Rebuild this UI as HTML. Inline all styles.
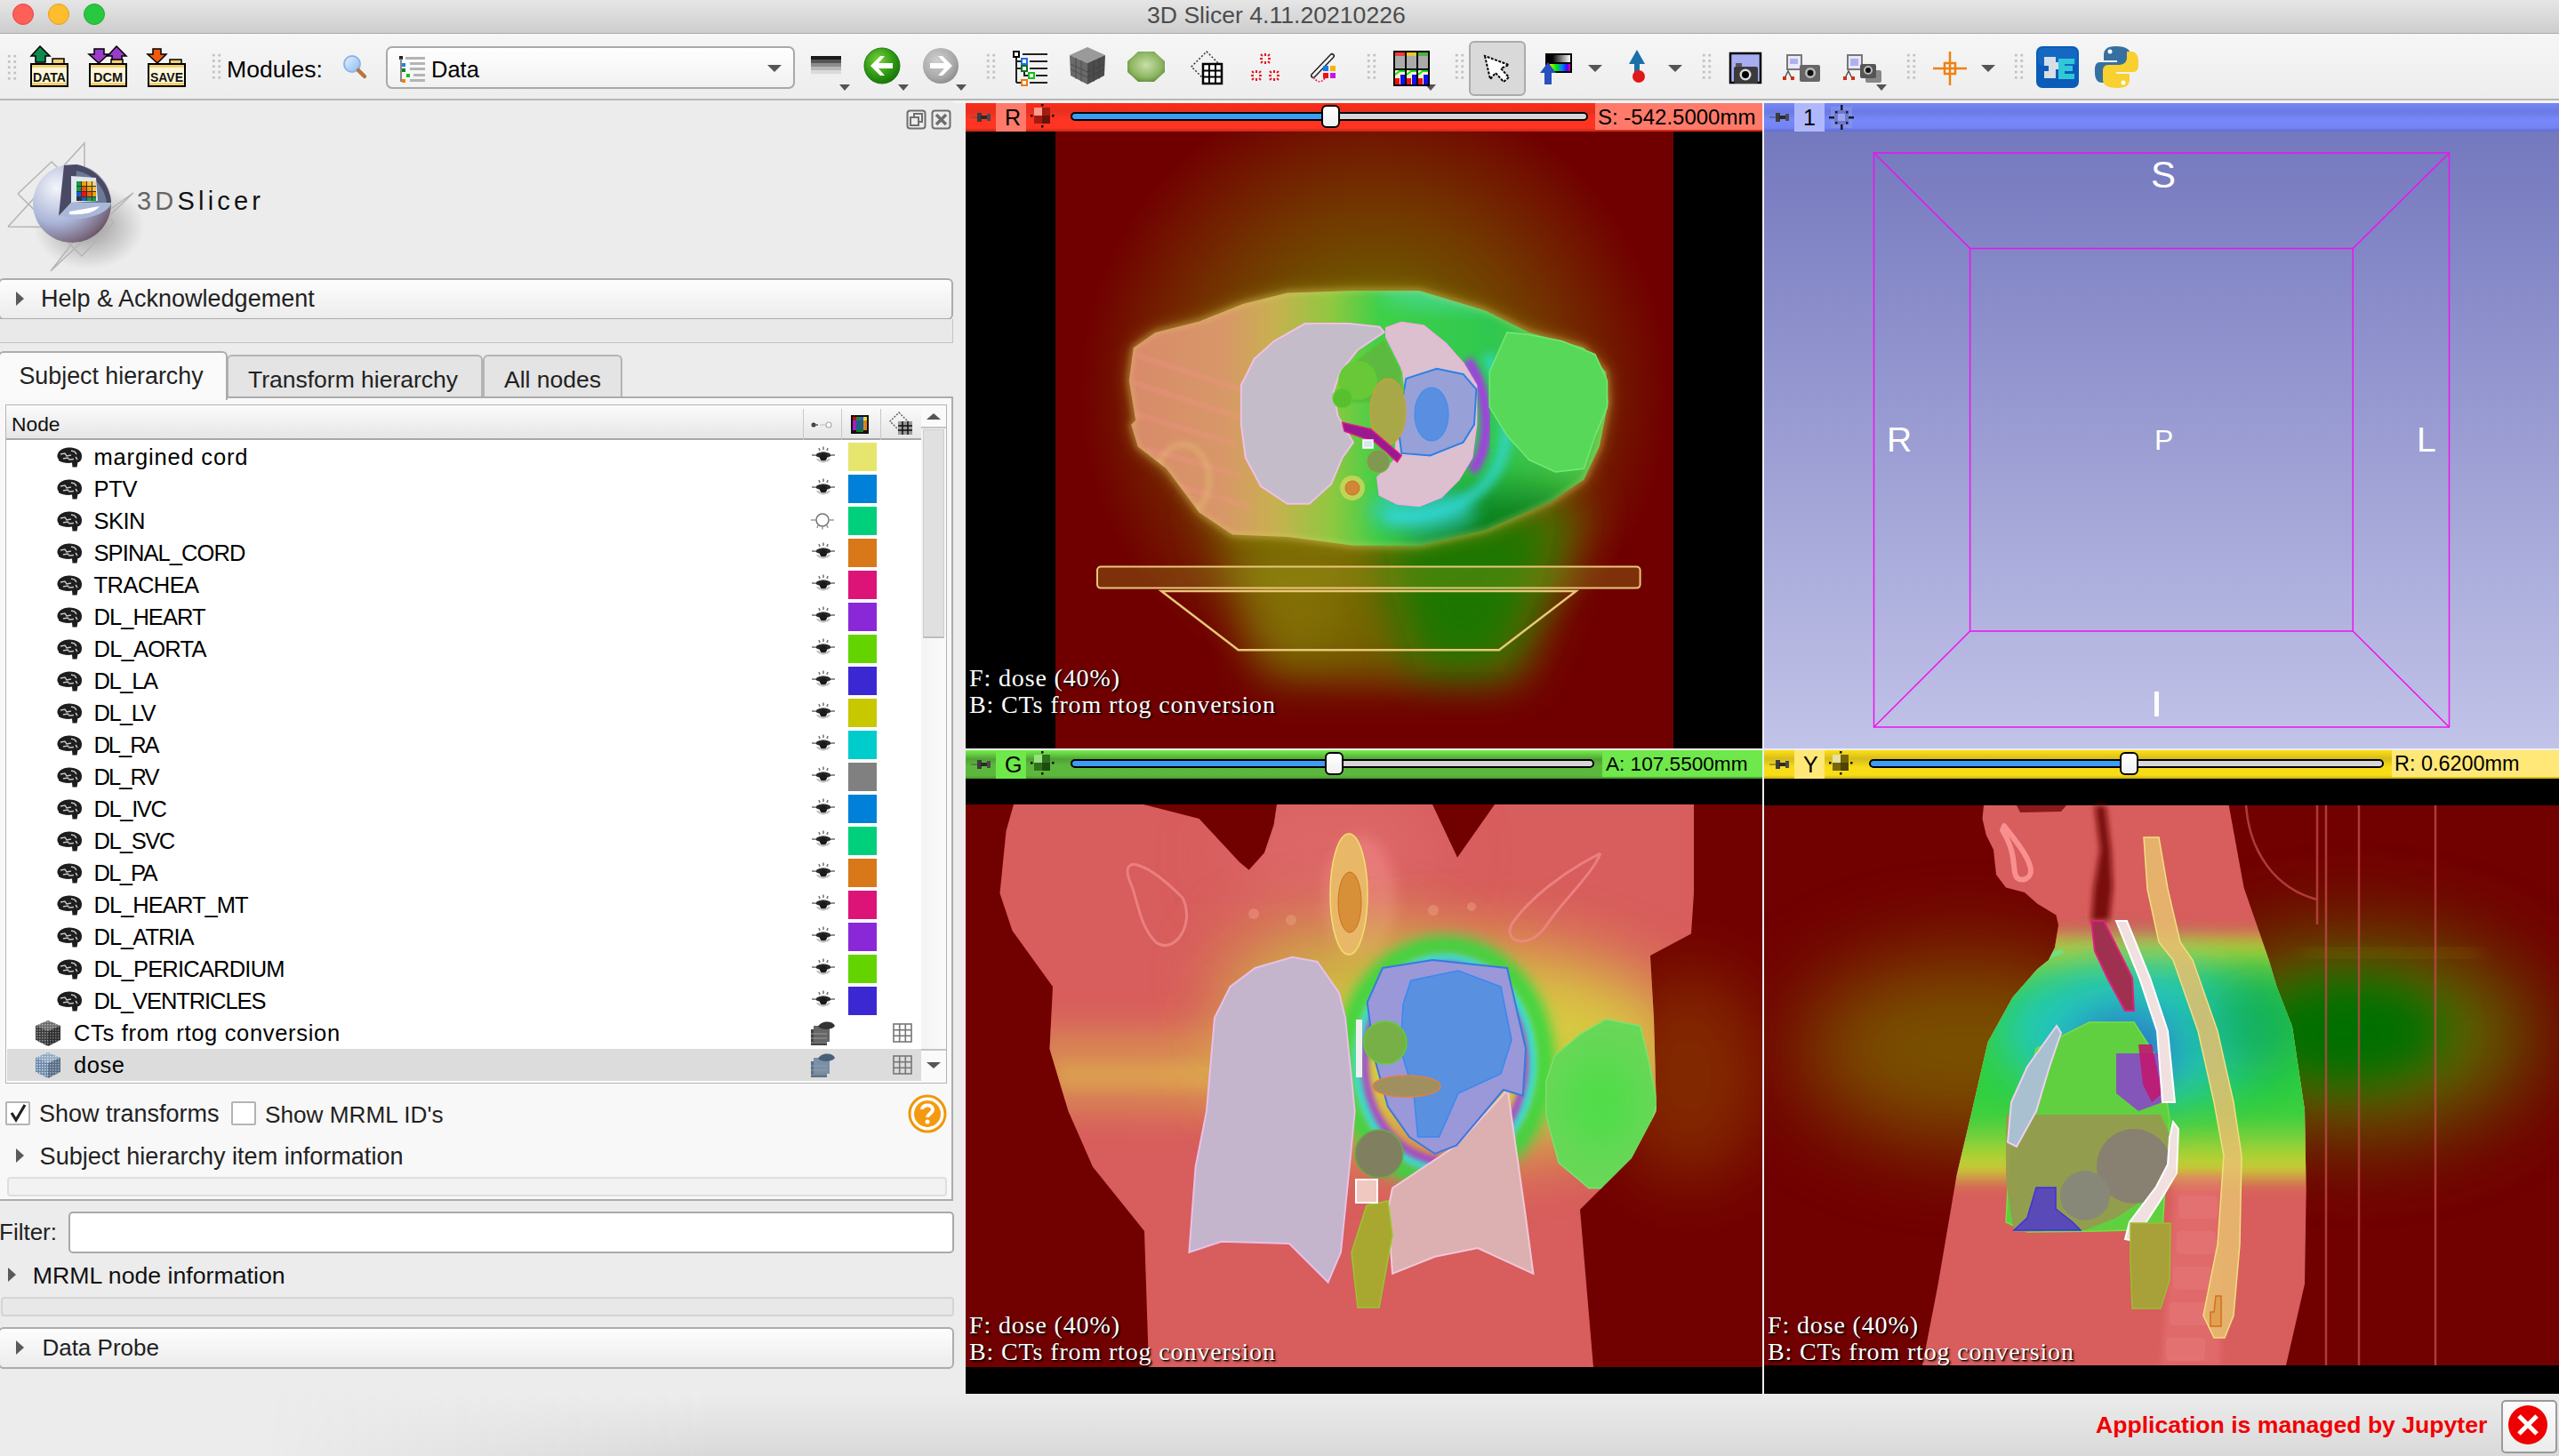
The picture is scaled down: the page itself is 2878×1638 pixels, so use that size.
<!DOCTYPE html>
<html><head><meta charset="utf-8">
<style>
*{box-sizing:border-box;margin:0;padding:0}
html,body{width:2878px;height:1638px;overflow:hidden;background:#ececec;font-family:"Liberation Sans",sans-serif;color:#000}
.a{position:absolute}
.t{position:absolute;white-space:pre;line-height:1}
svg{position:absolute;overflow:visible}
/* title */
#title{left:0;top:0;width:2878px;height:38px;background:linear-gradient(#e6e6e6,#cdcdcd);border-bottom:1.5px solid #a8a8a8}
.tl{position:absolute;top:4px;width:24px;height:24px;border-radius:50%}
#tb{left:0;top:38px;width:2878px;height:75px;background:linear-gradient(#f6f6f6,#ededed)}
#tbline{left:0;top:111px;width:2878px;height:2px;background:#b6b6b6}
.grip{position:absolute;width:13px;height:32px;background-image:radial-gradient(circle,#c2c2c2 1.3px,transparent 1.8px);background-size:6.5px 6.3px}
.dd{position:absolute;width:0;height:0;border-left:6px solid transparent;border-right:6px solid transparent;border-top:7px solid #555}
/* left panel */
.box{position:absolute;border:2px solid #acacac;border-radius:6px;background:linear-gradient(#fdfdfd,#ececec)}
.arr{position:absolute;width:0;height:0;border-top:8px solid transparent;border-bottom:8px solid transparent;border-left:9px solid #5a5a5a}
.row{position:absolute;left:8px;width:1028px;height:36px}
.rt{position:absolute;left:97.5px;top:6px;font-size:25.5px;white-space:pre;line-height:1.0}
.sw{position:absolute;left:946px;top:2px;width:32px;height:32px}
/* views */
.hdr{position:absolute;height:32px}
.vtxt{position:absolute;font-family:"Liberation Serif",serif;color:#fff;font-size:28px;letter-spacing:0.86px;line-height:30px;white-space:pre;text-shadow:1px 1px 1px #000,2px 2px 2px rgba(0,0,0,.6)}
</style></head>
<body>
<!-- TITLE BAR -->
<div id="title" class="a">
  <div class="tl" style="left:14px;background:#fe5f57;border:1px solid #e2463f"></div>
  <div class="tl" style="left:54px;background:#febc2e;border:1px solid #dea123"></div>
  <div class="tl" style="left:94px;background:#28c840;border:1px solid #1dad2b"></div>
  <div class="t" style="left:1290px;top:4px;font-size:26.6px;color:#4c4c4c">3D Slicer 4.11.20210226</div>
</div>
<!-- TOOLBAR -->
<div id="tb" class="a"></div>
<div id="tbline" class="a"></div>

<div class="grip" style="left:7px;top:60px"></div>
<div class="grip" style="left:237px;top:59px"></div>
<div class="grip" style="left:1108px;top:59px"></div>
<div class="grip" style="left:1536px;top:59px"></div>
<div class="grip" style="left:1635px;top:59px"></div>
<div class="grip" style="left:1913px;top:59px"></div>
<div class="grip" style="left:2143px;top:59px"></div>
<div class="grip" style="left:2264px;top:59px"></div>
<div class="t" style="left:255px;top:64.5px;font-size:26.6px">Modules:</div>
<!-- combo -->
<div class="a" style="left:434px;top:52px;width:460px;height:48px;border:2px solid #a9a9a9;border-radius:7px;background:linear-gradient(#ffffff,#f1f1f1)"></div>
<div class="t" style="left:485px;top:66px;font-size:25.5px">Data</div>
<div class="dd" style="left:863px;top:73px;border-left-width:8px;border-right-width:8px;border-top-width:8px"></div>
<!-- pressed button -->
<div class="a" style="left:1652px;top:46px;width:64px;height:62px;border:2px solid #ababab;border-radius:6px;background:#d9d9d9"></div>
<div class="dd" style="left:944px;top:95px"></div>
<div class="dd" style="left:1010px;top:95px"></div>
<div class="dd" style="left:1075px;top:95px"></div>
<div class="dd" style="left:1603px;top:95px"></div>
<div class="dd" style="left:1786px;top:73px;border-left-width:8px;border-right-width:8px;border-top-width:8px"></div>
<div class="dd" style="left:1876px;top:73px;border-left-width:8px;border-right-width:8px;border-top-width:8px"></div>
<div class="dd" style="left:2110px;top:95px"></div>
<div class="dd" style="left:2228px;top:73px;border-left-width:8px;border-right-width:8px;border-top-width:8px"></div>
<svg width="2878" height="113" style="left:0;top:0" viewBox="0 0 2878 113">
 <defs>
  <radialGradient id="gback" cx="0.4" cy="0.35" r="0.7"><stop offset="0" stop-color="#7fd23c"/><stop offset="0.6" stop-color="#2e9a14"/><stop offset="1" stop-color="#1a6e0a"/></radialGradient>
  <radialGradient id="gfwd" cx="0.4" cy="0.35" r="0.7"><stop offset="0" stop-color="#d0d0d0"/><stop offset="0.7" stop-color="#a8a8a8"/><stop offset="1" stop-color="#8a8a8a"/></radialGradient>
  <radialGradient id="gblob" cx="0.5" cy="0.45" r="0.6"><stop offset="0" stop-color="#c8e0a8"/><stop offset="0.7" stop-color="#8cb460"/><stop offset="1" stop-color="#5c8a38"/></radialGradient>
  <linearGradient id="gcube" x1="0" y1="0" x2="1" y2="1"><stop offset="0" stop-color="#c8c8c8"/><stop offset="1" stop-color="#3c3c3c"/></linearGradient>
  <linearGradient id="gmag" x1="0" y1="0" x2="1" y2="1"><stop offset="0" stop-color="#e8f2ff"/><stop offset="1" stop-color="#8cb8f0"/></linearGradient>
 </defs>
 <!-- DATA -->
 <g>
  <polygon points="45,52 56,63 51,63 51,70 40,70 40,63 35,63" fill="#0e8a50" stroke="#000" stroke-width="1.5"/>
  <rect x="59" y="66" width="13" height="6" fill="#f0d070" stroke="#000" stroke-width="1.5"/>
  <rect x="35" y="72" width="41" height="25" fill="#fdf6d8" stroke="#000" stroke-width="2"/>
  <rect x="36" y="93" width="39" height="3" fill="#f0d070"/>
  <rect x="36" y="73" width="39" height="3" fill="#f0d070"/>
  <text x="37" y="92" font-family="Liberation Sans" font-size="14" font-weight="700" fill="#111" textLength="37" lengthAdjust="spacingAndGlyphs">DATA</text>
 </g>
 <!-- DCM -->
 <g>
  <polygon points="106,55 117,55 117,61 122,61 111,71 100,61 106,61" fill="#9a3cc8" stroke="#000" stroke-width="1.5"/>
  <polygon points="131,52 142,63 137,63 137,70 126,70 126,63 121,63" fill="#9a3cc8" stroke="#000" stroke-width="1.5"/>
  <rect x="125" y="67" width="13" height="5" fill="#f0d070" stroke="#000" stroke-width="1.5"/>
  <rect x="101" y="72" width="41" height="25" fill="#fdf6d8" stroke="#000" stroke-width="2"/>
  <rect x="102" y="93" width="39" height="3" fill="#f0d070"/>
  <rect x="102" y="73" width="39" height="3" fill="#f0d070"/>
  <text x="105" y="92" font-family="Liberation Sans" font-size="14" font-weight="700" fill="#111" textLength="33" lengthAdjust="spacingAndGlyphs">DCM</text>
 </g>
 <!-- SAVE -->
 <g>
  <polygon points="172,55 181,55 181,61 187,61 177,71 166,61 172,61" fill="#f05a0a" stroke="#000" stroke-width="1.5"/>
  <rect x="191" y="67" width="13" height="5" fill="#f0d070" stroke="#000" stroke-width="1.5"/>
  <rect x="167" y="72" width="41" height="25" fill="#fdf6d8" stroke="#000" stroke-width="2"/>
  <rect x="168" y="93" width="39" height="3" fill="#f0d070"/>
  <rect x="168" y="73" width="39" height="3" fill="#f0d070"/>
  <text x="169" y="92" font-family="Liberation Sans" font-size="14" font-weight="700" fill="#111" textLength="37" lengthAdjust="spacingAndGlyphs">SAVE</text>
 </g>
 <!-- search -->
 <circle cx="396" cy="72" r="9" fill="url(#gmag)" stroke="#8ab4e8" stroke-width="2"/>
 <line x1="403" y1="79" x2="410" y2="86" stroke="#b8743c" stroke-width="4.5" stroke-linecap="round"/>
 <!-- data module icon in combo -->
 <g>
  <rect x="449" y="63" width="4" height="4" fill="#222"/>
  <rect x="450" y="66" width="2" height="26" fill="#888"/>
  <rect x="452" y="71" width="4" height="4" fill="#2080f0"/>
  <rect x="452" y="77" width="4" height="4" fill="#108020"/>
  <rect x="457" y="83" width="4" height="4" fill="#10c020"/>
  <rect x="452" y="89" width="4" height="4" fill="#f08010"/>
  <g fill="#b4b4b4"><rect x="456" y="64" width="22" height="3"/><rect x="461" y="70" width="17" height="3"/><rect x="461" y="76" width="17" height="3"/><rect x="465" y="83" width="13" height="3"/><rect x="461" y="89" width="17" height="3"/></g>
 </g>
 <!-- layers/colors icon -->
 <rect x="912" y="63" width="34" height="4" fill="#1a1a1a"/>
 <rect x="912" y="67" width="34" height="4" fill="#555"/>
 <rect x="912" y="71" width="34" height="4" fill="#8c8c8c"/>
 <rect x="912" y="75" width="34" height="4" fill="#b8b8b8"/>
 <rect x="912" y="79" width="34" height="4" fill="#dadada"/>
 <rect x="912" y="83" width="34" height="4" fill="#eeeeee"/>
 <!-- back -->
 <circle cx="992" cy="74" r="20" fill="url(#gback)" stroke="#1a7a10" stroke-width="1"/>
 <path d="M979,74 L990,63 L995,63 L988,71 L1004,71 L1004,77 L988,77 L995,85 L990,85 Z" fill="#fff"/>
 <!-- forward -->
 <circle cx="1058" cy="74" r="20" fill="url(#gfwd)"/>
 <path d="M1071,74 L1060,63 L1055,63 L1062,71 L1046,71 L1046,77 L1062,77 L1055,85 L1060,85 Z" fill="#fff"/>
 <!-- hierarchy -->
 <g fill="none" stroke="#222" stroke-width="2">
  <line x1="1143" y1="62" x2="1143" y2="93"/>
  <line x1="1143" y1="69" x2="1150" y2="69"/><line x1="1143" y1="77" x2="1150" y2="77"/>
  <polyline points="1152,77 1152,85 1157,85"/><line x1="1143" y1="93" x2="1150" y2="93"/>
  <line x1="1150" y1="61" x2="1178" y2="61"/><line x1="1158" y1="69" x2="1178" y2="69"/><line x1="1158" y1="77" x2="1178" y2="77"/><line x1="1165" y1="85" x2="1178" y2="85"/><line x1="1158" y1="93" x2="1178" y2="93"/>
 </g>
 <rect x="1140" y="58" width="6" height="6" fill="#fff" stroke="#000" stroke-width="2"/>
 <rect x="1149" y="66" width="6" height="6" fill="#fff" stroke="#1a6ef0" stroke-width="2"/>
 <rect x="1149" y="74" width="6" height="6" fill="#fff" stroke="#107018" stroke-width="2"/>
 <rect x="1157" y="82" width="6" height="6" fill="#fff" stroke="#10c018" stroke-width="2"/>
 <rect x="1149" y="90" width="6" height="6" fill="#fff" stroke="#f07810" stroke-width="2"/>
 <!-- cube -->
 <g>
  <polygon points="1223,53 1243,62 1223,71 1203,62" fill="#9a9a9a"/>
  <polygon points="1203,62 1223,71 1223,95 1204,85" fill="#6a6a6a"/>
  <polygon points="1243,62 1223,71 1223,95 1242,85" fill="#4c4c4c"/>
  <g stroke="#3a3a3a" stroke-width="1" opacity="0.6"><line x1="1210" y1="65" x2="1210" y2="89"/><line x1="1216" y1="68" x2="1216" y2="92"/><line x1="1230" y1="68" x2="1230" y2="92"/><line x1="1236" y1="65" x2="1236" y2="89"/><line x1="1204" y1="72" x2="1223" y2="81"/><line x1="1204" y1="78" x2="1223" y2="87"/><line x1="1242" y1="72" x2="1223" y2="81"/><line x1="1242" y1="78" x2="1223" y2="87"/></g>
 </g>
 <!-- green blob -->
 <polygon points="1280,58 1298,58 1310,69 1310,81 1298,92 1280,92 1268,81 1268,69" fill="url(#gblob)"/>
 <!-- grid icon -->
 <g>
  <polygon points="1357,58 1374,75 1357,92 1340,75" fill="none" stroke="#333" stroke-width="1.5" stroke-dasharray="2,2"/>
  <rect x="1353" y="72" width="21" height="22" fill="#fff" stroke="#000" stroke-width="2.5"/>
  <g stroke="#000" stroke-width="2"><line x1="1360" y1="72" x2="1360" y2="94"/><line x1="1367" y1="72" x2="1367" y2="94"/><line x1="1353" y1="79.5" x2="1374" y2="79.5"/><line x1="1353" y1="86.5" x2="1374" y2="86.5"/></g>
 </g>
 <!-- red sparks -->
 <g stroke="#e8101a" stroke-width="2">
  <g transform="translate(1423,66)"><line x1="0" y1="-6" x2="0" y2="-3"/><line x1="0" y1="3" x2="0" y2="6"/><line x1="-6" y1="0" x2="-3" y2="0"/><line x1="3" y1="0" x2="6" y2="0"/><line x1="-5" y1="-5" x2="-3" y2="-3"/><line x1="3" y1="3" x2="5" y2="5"/><line x1="-5" y1="5" x2="-3" y2="3"/><line x1="3" y1="-3" x2="5" y2="-5"/></g>
  <g transform="translate(1413,85)"><line x1="0" y1="-6" x2="0" y2="-3"/><line x1="0" y1="3" x2="0" y2="6"/><line x1="-6" y1="0" x2="-3" y2="0"/><line x1="3" y1="0" x2="6" y2="0"/><line x1="-5" y1="-5" x2="-3" y2="-3"/><line x1="3" y1="3" x2="5" y2="5"/><line x1="-5" y1="5" x2="-3" y2="3"/><line x1="3" y1="-3" x2="5" y2="-5"/></g>
  <g transform="translate(1433,85)"><line x1="0" y1="-6" x2="0" y2="-3"/><line x1="0" y1="3" x2="0" y2="6"/><line x1="-6" y1="0" x2="-3" y2="0"/><line x1="3" y1="0" x2="6" y2="0"/><line x1="-5" y1="-5" x2="-3" y2="-3"/><line x1="3" y1="3" x2="5" y2="5"/><line x1="-5" y1="5" x2="-3" y2="3"/><line x1="3" y1="-3" x2="5" y2="-5"/></g>
 </g>
 <!-- pencil -->
 <g>
  <line x1="1477" y1="85" x2="1498" y2="63" stroke="#222" stroke-width="6" stroke-linecap="round"/>
  <line x1="1477" y1="85" x2="1498" y2="63" stroke="#f4f4f4" stroke-width="3" stroke-linecap="round"/>
  <rect x="1488" y="74" width="6" height="6" fill="#1a78f0"/><rect x="1496" y="74" width="6" height="6" fill="#f8b400"/>
  <rect x="1488" y="82" width="6" height="6" fill="#f01010"/><rect x="1496" y="82" width="6" height="6" fill="#c818e0"/>
  <path d="M1477,87 Q1484,96 1490,88" fill="none" stroke="#e02050" stroke-width="1.5" stroke-dasharray="2,1.5"/>
 </g>
 <!-- layout icon -->
 <g>
  <rect x="1567" y="57" width="41" height="40" fill="#000"/>
  <rect x="1569" y="59" width="11" height="4" fill="#f03c3c"/><rect x="1582" y="59" width="11" height="4" fill="#e8c830"/><rect x="1595" y="59" width="11" height="4" fill="#50b040"/>
  <rect x="1569" y="63" width="11" height="14" fill="#aaa"/><rect x="1582" y="63" width="11" height="14" fill="#aaa"/><rect x="1595" y="63" width="11" height="14" fill="#aaa"/>
  <g><rect x="1569" y="79" width="11" height="16" fill="#f8f0d0"/><rect x="1569" y="88" width="5" height="7" fill="#f01010"/><rect x="1575" y="84" width="5" height="11" fill="#1010f0"/><path d="M1569,84 L1574,80 L1580,80" stroke="#10e010" stroke-width="2" fill="none"/></g>
  <g><rect x="1582" y="79" width="11" height="16" fill="#f8f0d0"/><rect x="1582" y="88" width="5" height="7" fill="#f01010"/><rect x="1588" y="84" width="5" height="11" fill="#1010f0"/><path d="M1582,84 L1587,80 L1593,80" stroke="#10e010" stroke-width="2" fill="none"/></g>
  <g><rect x="1595" y="79" width="11" height="16" fill="#f8f0d0"/><rect x="1595" y="88" width="5" height="7" fill="#f01010"/><rect x="1601" y="84" width="5" height="11" fill="#1010f0"/><path d="M1595,84 L1600,80 L1606,80" stroke="#10e010" stroke-width="2" fill="none"/></g>
 </g>
 <!-- cursor -->
 <path d="M1670,63 L1676,89 L1682,82 L1691,92 L1697,87 L1688,77 L1697,73 Z" fill="#fff" stroke="#000" stroke-width="2" stroke-dasharray="3,1.5"/>
 <!-- window level icon -->
 <g>
  <rect x="1738" y="60" width="30" height="22" fill="#000"/>
  <defs><linearGradient id="gwl" x1="0" x2="1"><stop offset="0" stop-color="#000"/><stop offset="1" stop-color="#fff"/></linearGradient>
  <linearGradient id="grb" x1="0" x2="1"><stop offset="0" stop-color="#f0f000"/><stop offset="0.3" stop-color="#00f000"/><stop offset="0.6" stop-color="#0080ff"/><stop offset="0.85" stop-color="#4000ff"/><stop offset="1" stop-color="#ff00a0"/></linearGradient></defs>
  <rect x="1746" y="62" width="20" height="8" fill="url(#gwl)"/>
  <rect x="1743" y="72" width="23" height="8" fill="url(#grb)"/>
  <polygon points="1741,70 1750,82 1745,82 1745,95 1737,95 1737,82 1732,82" fill="#2850c0"/>
 </g>
 <!-- fiducial -->
 <g>
  <polygon points="1841,56 1850,72 1844,72 1844,82 1838,82 1838,72 1832,72" fill="#1a70a8"/>
  <circle cx="1843" cy="86" r="7" fill="#e01818"/>
 </g>
 <!-- screenshot -->
 <g>
  <rect x="1946" y="60" width="34" height="33" fill="#a8acf0" stroke="#000" stroke-width="2.5"/>
  <rect x="1950" y="75" width="27" height="19" rx="2" fill="#3a3a3a"/>
  <rect x="1952" y="71" width="7" height="4" fill="#555"/>
  <circle cx="1963" cy="84" r="6.5" fill="#ddd"/><circle cx="1963" cy="84" r="4" fill="#000"/>
 </g>
 <!-- scene screenshot -->
 <g>
  <rect x="2010" y="62" width="16" height="16" fill="#e8e8f8" stroke="#777" stroke-width="2"/>
  <rect x="2013" y="66" width="9" height="6" fill="#b0b0f0"/>
  <path d="M2006,90 L2011,80 L2016,90" stroke="#555" stroke-width="1.5" fill="none"/>
  <rect x="2005" y="86" width="4" height="4" fill="#d03010"/><rect x="2014" y="86" width="4" height="4" fill="#d03010"/>
  <rect x="2024" y="73" width="23" height="19" rx="2" fill="#666"/>
  <circle cx="2036" cy="82" r="6" fill="#bbb"/><circle cx="2036" cy="82" r="3.5" fill="#111"/>
 </g>
 <g>
  <rect x="2078" y="62" width="16" height="16" fill="#e8e8f8" stroke="#777" stroke-width="2"/>
  <rect x="2081" y="66" width="9" height="8" fill="#b0b0f0"/>
  <path d="M2074,90 L2079,80 L2084,90" stroke="#555" stroke-width="1.5" fill="none"/>
  <rect x="2073" y="86" width="4" height="4" fill="#d03010"/><rect x="2082" y="86" width="4" height="4" fill="#d03010"/>
  <rect x="2098" y="79" width="18" height="14" rx="2" fill="#888"/>
  <rect x="2092" y="72" width="18" height="16" rx="2" fill="#555"/>
  <circle cx="2101" cy="79" r="5" fill="#bbb"/><circle cx="2101" cy="79" r="3" fill="#111"/>
 </g>
 <!-- crosshair -->
 <g stroke="#f08010" stroke-width="2.5" fill="none">
  <line x1="2193" y1="58" x2="2193" y2="96"/><line x1="2174" y1="77" x2="2212" y2="77"/>
  <rect x="2187" y="71" width="12" height="12"/>
 </g>
 <!-- extension -->
 <g>
  <rect x="2290" y="52" width="48" height="47" rx="7" fill="#0a5cb8"/>
  <rect x="2292" y="54" width="44" height="20" rx="6" fill="#1a70c8" opacity="0.6"/>
  <path d="M2299,64 L2312,64 L2312,70 L2318,70 L2318,78 L2312,78 L2312,88 L2299,88 L2299,80 L2304,80 L2304,74 L2299,74 Z" fill="#d8dde6"/>
  <path d="M2315,66 L2333,66 L2333,72 L2322,72 L2322,74 L2331,74 L2331,80 L2322,80 L2322,83 L2333,83 L2333,89 L2315,89 Z" fill="#30c8d8"/>
 </g>
 <!-- python -->
 <g>
  <path d="M2380,52 C2368,52 2366,57 2366,62 L2366,68 L2381,68 L2381,70 L2362,70 C2355,70 2356,78 2356,82 C2356,90 2360,93 2364,93 L2369,93 L2369,86 C2369,81 2373,78 2378,78 L2390,78 C2394,78 2396,75 2396,72 L2396,61 C2396,56 2391,52 2380,52 Z" fill="#3670a0"/>
  <path d="M2381,99 C2393,99 2395,94 2395,89 L2395,83 L2380,83 L2380,81 L2399,81 C2406,81 2405,73 2405,69 C2405,61 2401,58 2397,58 L2392,58 L2392,65 C2392,70 2388,73 2383,73 L2371,73 C2367,73 2365,76 2365,79 L2365,90 C2365,95 2370,99 2381,99 Z" fill="#f8d030"/>
  <circle cx="2373" cy="58" r="2.5" fill="#fff"/><circle cx="2388" cy="93" r="2.5" fill="#fff"/>
 </g>
</svg>


<!-- LEFT PANEL -->

<!-- float/close -->
<svg width="60" height="26" style="left:1018px;top:122px" viewBox="0 0 60 26">
 <rect x="2.5" y="2.5" width="20" height="20" rx="3" fill="none" stroke="#6e6e6e" stroke-width="2"/>
 <rect x="6" y="10" width="9" height="9" fill="none" stroke="#6e6e6e" stroke-width="2"/>
 <path d="M10,9 L10,6 L19,6 L19,15 L16,15" fill="none" stroke="#6e6e6e" stroke-width="2"/>
 <rect x="30.5" y="2.5" width="20" height="20" rx="3" fill="none" stroke="#6e6e6e" stroke-width="2"/>
 <path d="M35,7 L46,18 M46,7 L35,18" stroke="#6e6e6e" stroke-width="3.5"/>
</svg>
<!-- logo -->
<svg width="300" height="160" style="left:0;top:150px" viewBox="0 150 300 160">
 <defs>
  <radialGradient id="lgs" cx="0.3" cy="0.3" r="0.9"><stop offset="0" stop-color="#f4f6fa"/><stop offset="0.5" stop-color="#aab4d8"/><stop offset="0.8" stop-color="#7a6a80"/><stop offset="1" stop-color="#4a2a2a"/></radialGradient>
  <radialGradient id="lgsh" cx="0.5" cy="0.5" r="0.5"><stop offset="0" stop-color="#000" stop-opacity="0.35"/><stop offset="1" stop-color="#000" stop-opacity="0"/></radialGradient>
 </defs>
 <ellipse cx="100" cy="255" rx="62" ry="48" fill="url(#lgsh)"/>
 <g stroke="#b4b4b4" stroke-width="1.5" fill="none">
  <polyline points="9,255 95,161 95,256 9,255"/>
  <polyline points="57,305 150,217 95,256 57,305"/>
  <polyline points="20,218 58,182 128,250 92,288 20,218"/>
 </g>
 <circle cx="81" cy="229" r="44" fill="url(#lgs)"/>
 <path d="M72,186 L86,185 C110,190 124,210 125,228 L80,228 L66,243 Z" fill="#4a4a64"/>
 <path d="M86,192 C106,196 118,212 120,228 L84,228 Z" fill="#6a7a98"/>
 <path d="M80,198 L108,200 L110,226 L80,228 Z" fill="#dfe8ee"/>
 <rect x="86" y="204" width="22" height="22" fill="#333"/>
 <g><rect x="86" y="204" width="5" height="5" fill="#10a040"/><rect x="92" y="204" width="5" height="5" fill="#f0a000"/><rect x="98" y="204" width="5" height="5" fill="#f8c040"/><rect x="104" y="204" width="4" height="5" fill="#f8d080"/>
 <rect x="86" y="210" width="5" height="5" fill="#10a040"/><rect x="92" y="210" width="5" height="5" fill="#f05010"/><rect x="98" y="210" width="5" height="5" fill="#f0a000"/><rect x="104" y="210" width="4" height="5" fill="#f8c040"/>
 <rect x="86" y="216" width="5" height="5" fill="#1060d0"/><rect x="92" y="216" width="5" height="5" fill="#f01010"/><rect x="98" y="216" width="5" height="5" fill="#f06010"/><rect x="104" y="216" width="4" height="5" fill="#f0a000"/>
 <rect x="92" y="222" width="5" height="4" fill="#1060d0"/><rect x="98" y="222" width="5" height="4" fill="#10a040"/><rect x="104" y="222" width="4" height="4" fill="#10a040"/></g>
 <path d="M66,243 L80,228 L125,228 C124,236 110,244 90,246 Z" fill="#aab8d8"/>
 <path d="M78,238 L112,232 C106,240 92,242 78,241 Z" fill="#fff"/>
 <text x="154" y="236" font-family="Liberation Sans" font-size="29" fill="#111" letter-spacing="4.2"><tspan fill="#666">3D</tspan>Slicer</text>
</svg>
<!-- help box -->
<div class="box" style="left:-2px;top:313px;width:1074px;height:47px"></div>
<div class="arr" style="left:18px;top:328px"></div>
<div class="t" style="left:46px;top:323px;font-size:27px;color:#222">Help &amp; Acknowledgement</div>
<div class="a" style="left:-2px;top:359px;width:1074px;height:27px;border:1px solid #c4c4c4;border-top:none;background:#e9e9e9"></div>
<!-- tabs -->
<div class="a" style="left:-2px;top:446px;width:1074px;height:905px;border:2px solid #acacac;background:#f8f8f8"></div>
<div class="a" style="left:255px;top:399px;width:288px;height:47px;border:2px solid #b4b4b4;border-bottom:none;border-radius:6px 6px 0 0;background:#e4e4e4"></div>
<div class="a" style="left:543px;top:399px;width:157px;height:47px;border:2px solid #b4b4b4;border-bottom:none;border-radius:6px 6px 0 0;background:#e4e4e4"></div>
<div class="a" style="left:-2px;top:395px;width:258px;height:55px;border:2px solid #acacac;border-bottom:none;border-radius:6px 6px 0 0;background:#fafafa"></div>
<div class="t" style="left:21.5px;top:410px;font-size:26.8px;color:#222">Subject hierarchy</div>
<div class="t" style="left:279px;top:414px;font-size:26.5px;color:#222">Transform hierarchy</div>
<div class="t" style="left:567px;top:414px;font-size:26.5px;color:#222">All nodes</div>
<!-- tree -->
<div class="a" style="left:6px;top:455px;width:1059px;height:764px;border:1px solid #b4b4b4;background:#fff;overflow:hidden">
 <div class="a" style="left:0;top:0;width:1030px;height:39px;background:linear-gradient(#fbfbfb,#e6e6e6);border-bottom:2px solid #a8a8a8"></div>
 <div class="a" style="left:896px;top:4px;width:1px;height:35px;background:#c8c8c8"></div>
 <div class="a" style="left:939px;top:4px;width:1px;height:35px;background:#c8c8c8"></div>
 <div class="a" style="left:983px;top:4px;width:1px;height:35px;background:#c8c8c8"></div>
 <div class="a" style="left:1029px;top:0;width:1px;height:764px;background:#c8c8c8"></div>
 <div class="t" style="left:6px;top:10px;font-size:22.8px;color:#111">Node</div>
</div>
<svg width="140" height="40" style="left:902px;top:455px" viewBox="902 455 140 40">
 <circle cx="915" cy="478" r="2.5" fill="#333"/><line x1="913" y1="478" x2="920" y2="478" stroke="#555" stroke-width="1.5"/><circle cx="932" cy="478" r="3" fill="#fff" stroke="#aaa" stroke-width="1.2"/><line x1="922" y1="478" x2="928" y2="478" stroke="#ccc" stroke-width="1.5"/>
 <rect x="957" y="467" width="20" height="21" fill="#111"/>
 <g><rect x="959" y="469" width="4" height="4" fill="#c01010"/><rect x="963" y="469" width="4" height="4" fill="#308040"/><rect x="967" y="469" width="4" height="4" fill="#3060c0"/><rect x="971" y="469" width="4" height="4" fill="#e0e040"/>
 <rect x="959" y="473" width="4" height="11" fill="#a020c0"/><rect x="963" y="473" width="8" height="11" fill="#206080"/><rect x="971" y="473" width="4" height="11" fill="#e08020"/><rect x="963" y="484" width="8" height="2" fill="#108010"/></g>
 <polygon points="1011,464 1021,474 1011,484 1001,474" fill="none" stroke="#666" stroke-width="1.5" stroke-dasharray="2,1.5"/>
 <rect x="1010" y="474" width="16" height="15" fill="#999"/>
 <g stroke="#111" stroke-width="1.5"><line x1="1010" y1="479" x2="1026" y2="479"/><line x1="1010" y1="484" x2="1026" y2="484"/><line x1="1015" y1="474" x2="1015" y2="489"/><line x1="1021" y1="474" x2="1021" y2="489"/></g>
</svg>
<!-- scrollbar -->
<div class="a" style="left:1036px;top:456px;width:28px;height:762px;background:linear-gradient(90deg,#f4f4f4,#fafafa)"></div>
<div class="a" style="left:1036px;top:456px;width:28px;height:26px;background:#fafafa;border-bottom:2px solid #c4c4c4"></div>
<div class="dd" style="left:1042px;top:465px;border-top:none;border-bottom:7px solid #555;border-left-width:8px;border-right-width:8px"></div>
<div class="a" style="left:1038px;top:483px;width:24px;height:235px;background:#e0e0e0;border:1px solid #cccccc;border-bottom:2px solid #bdbdbd"></div>
<div class="a" style="left:1036px;top:1180px;width:28px;height:38px;background:#fafafa;border-top:2px solid #c4c4c4"></div>
<div class="dd" style="left:1042px;top:1195px;border-left-width:8px;border-right-width:8px"></div>
<div class="row" style="top:496px"><svg width="30" height="26" style="left:55px;top:5px" viewBox="0 0 30 26"><path d="M1.5,13 C1,7 7,2.5 15,2.5 C23,2.5 29,6 29,12 C29,16.5 27,19 24.5,19 L23.5,24.5 L18.5,24.5 L18,19.5 C13,20.5 7,19.5 3.5,17.5 Z" fill="#1e1e1e"/><path d="M5,10 L10,9 L12,12 L17,11 M8,15 L13,14 L15,16 L20,15.5 M17,6 L21,7 L23,10 M22,13 L24,16" stroke="#c8c8c8" stroke-width="1.4" fill="none"/></svg><div class="rt" style="letter-spacing:0.83px">margined cord</div><svg width="28" height="22" style="left:904px;top:6px" viewBox="0 0 28 22"><g stroke="#777" stroke-width="1.6"><line x1="14" y1="0.5" x2="14" y2="4"/><line x1="9" y1="2" x2="10" y2="5"/><line x1="19" y1="2" x2="18" y2="5"/><line x1="1" y1="10" x2="5" y2="10"/><line x1="23" y1="10" x2="27" y2="10"/></g><path d="M5,11 C8,5 20,5 23,11 L20,11 C17,9 11,9 8,11 Z" fill="#1c1c1c"/><ellipse cx="14" cy="10" rx="8.5" ry="3.2" fill="#2a2a2a"/><circle cx="14" cy="12.5" r="4" fill="#1a1a1a"/><path d="M7,14 C10,18.5 18,18.5 21,14" stroke="#bdbdbd" stroke-width="2" fill="none"/></svg><div class="sw" style="background:#e6e66e"></div></div>
<div class="row" style="top:532px"><svg width="30" height="26" style="left:55px;top:5px" viewBox="0 0 30 26"><path d="M1.5,13 C1,7 7,2.5 15,2.5 C23,2.5 29,6 29,12 C29,16.5 27,19 24.5,19 L23.5,24.5 L18.5,24.5 L18,19.5 C13,20.5 7,19.5 3.5,17.5 Z" fill="#1e1e1e"/><path d="M5,10 L10,9 L12,12 L17,11 M8,15 L13,14 L15,16 L20,15.5 M17,6 L21,7 L23,10 M22,13 L24,16" stroke="#c8c8c8" stroke-width="1.4" fill="none"/></svg><div class="rt" style="letter-spacing:-0.3px">PTV</div><svg width="28" height="22" style="left:904px;top:6px" viewBox="0 0 28 22"><g stroke="#777" stroke-width="1.6"><line x1="14" y1="0.5" x2="14" y2="4"/><line x1="9" y1="2" x2="10" y2="5"/><line x1="19" y1="2" x2="18" y2="5"/><line x1="1" y1="10" x2="5" y2="10"/><line x1="23" y1="10" x2="27" y2="10"/></g><path d="M5,11 C8,5 20,5 23,11 L20,11 C17,9 11,9 8,11 Z" fill="#1c1c1c"/><ellipse cx="14" cy="10" rx="8.5" ry="3.2" fill="#2a2a2a"/><circle cx="14" cy="12.5" r="4" fill="#1a1a1a"/><path d="M7,14 C10,18.5 18,18.5 21,14" stroke="#bdbdbd" stroke-width="2" fill="none"/></svg><div class="sw" style="background:#0080d8"></div></div>
<div class="row" style="top:568px"><svg width="30" height="26" style="left:55px;top:5px" viewBox="0 0 30 26"><path d="M1.5,13 C1,7 7,2.5 15,2.5 C23,2.5 29,6 29,12 C29,16.5 27,19 24.5,19 L23.5,24.5 L18.5,24.5 L18,19.5 C13,20.5 7,19.5 3.5,17.5 Z" fill="#1e1e1e"/><path d="M5,10 L10,9 L12,12 L17,11 M8,15 L13,14 L15,16 L20,15.5 M17,6 L21,7 L23,10 M22,13 L24,16" stroke="#c8c8c8" stroke-width="1.4" fill="none"/></svg><div class="rt" style="letter-spacing:-0.51px">SKIN</div><svg width="28" height="22" style="left:903px;top:6px" viewBox="0 0 28 22"><circle cx="14" cy="11" r="7" fill="#fff" stroke="#707070" stroke-width="1.5"/><g stroke="#999" stroke-width="1.5"><line x1="1" y1="11" x2="6" y2="11"/><line x1="22" y1="11" x2="27" y2="11"/><line x1="14" y1="18" x2="14" y2="21.5"/><line x1="9" y1="17" x2="8" y2="20"/><line x1="19" y1="17" x2="20" y2="20"/></g></svg><div class="sw" style="background:#00d07c"></div></div>
<div class="row" style="top:604px"><svg width="30" height="26" style="left:55px;top:5px" viewBox="0 0 30 26"><path d="M1.5,13 C1,7 7,2.5 15,2.5 C23,2.5 29,6 29,12 C29,16.5 27,19 24.5,19 L23.5,24.5 L18.5,24.5 L18,19.5 C13,20.5 7,19.5 3.5,17.5 Z" fill="#1e1e1e"/><path d="M5,10 L10,9 L12,12 L17,11 M8,15 L13,14 L15,16 L20,15.5 M17,6 L21,7 L23,10 M22,13 L24,16" stroke="#c8c8c8" stroke-width="1.4" fill="none"/></svg><div class="rt" style="letter-spacing:-0.9px">SPINAL_CORD</div><svg width="28" height="22" style="left:904px;top:6px" viewBox="0 0 28 22"><g stroke="#777" stroke-width="1.6"><line x1="14" y1="0.5" x2="14" y2="4"/><line x1="9" y1="2" x2="10" y2="5"/><line x1="19" y1="2" x2="18" y2="5"/><line x1="1" y1="10" x2="5" y2="10"/><line x1="23" y1="10" x2="27" y2="10"/></g><path d="M5,11 C8,5 20,5 23,11 L20,11 C17,9 11,9 8,11 Z" fill="#1c1c1c"/><ellipse cx="14" cy="10" rx="8.5" ry="3.2" fill="#2a2a2a"/><circle cx="14" cy="12.5" r="4" fill="#1a1a1a"/><path d="M7,14 C10,18.5 18,18.5 21,14" stroke="#bdbdbd" stroke-width="2" fill="none"/></svg><div class="sw" style="background:#d87818"></div></div>
<div class="row" style="top:640px"><svg width="30" height="26" style="left:55px;top:5px" viewBox="0 0 30 26"><path d="M1.5,13 C1,7 7,2.5 15,2.5 C23,2.5 29,6 29,12 C29,16.5 27,19 24.5,19 L23.5,24.5 L18.5,24.5 L18,19.5 C13,20.5 7,19.5 3.5,17.5 Z" fill="#1e1e1e"/><path d="M5,10 L10,9 L12,12 L17,11 M8,15 L13,14 L15,16 L20,15.5 M17,6 L21,7 L23,10 M22,13 L24,16" stroke="#c8c8c8" stroke-width="1.4" fill="none"/></svg><div class="rt" style="letter-spacing:-0.54px">TRACHEA</div><svg width="28" height="22" style="left:904px;top:6px" viewBox="0 0 28 22"><g stroke="#777" stroke-width="1.6"><line x1="14" y1="0.5" x2="14" y2="4"/><line x1="9" y1="2" x2="10" y2="5"/><line x1="19" y1="2" x2="18" y2="5"/><line x1="1" y1="10" x2="5" y2="10"/><line x1="23" y1="10" x2="27" y2="10"/></g><path d="M5,11 C8,5 20,5 23,11 L20,11 C17,9 11,9 8,11 Z" fill="#1c1c1c"/><ellipse cx="14" cy="10" rx="8.5" ry="3.2" fill="#2a2a2a"/><circle cx="14" cy="12.5" r="4" fill="#1a1a1a"/><path d="M7,14 C10,18.5 18,18.5 21,14" stroke="#bdbdbd" stroke-width="2" fill="none"/></svg><div class="sw" style="background:#dc1478"></div></div>
<div class="row" style="top:676px"><svg width="30" height="26" style="left:55px;top:5px" viewBox="0 0 30 26"><path d="M1.5,13 C1,7 7,2.5 15,2.5 C23,2.5 29,6 29,12 C29,16.5 27,19 24.5,19 L23.5,24.5 L18.5,24.5 L18,19.5 C13,20.5 7,19.5 3.5,17.5 Z" fill="#1e1e1e"/><path d="M5,10 L10,9 L12,12 L17,11 M8,15 L13,14 L15,16 L20,15.5 M17,6 L21,7 L23,10 M22,13 L24,16" stroke="#c8c8c8" stroke-width="1.4" fill="none"/></svg><div class="rt" style="letter-spacing:-0.96px">DL_HEART</div><svg width="28" height="22" style="left:904px;top:6px" viewBox="0 0 28 22"><g stroke="#777" stroke-width="1.6"><line x1="14" y1="0.5" x2="14" y2="4"/><line x1="9" y1="2" x2="10" y2="5"/><line x1="19" y1="2" x2="18" y2="5"/><line x1="1" y1="10" x2="5" y2="10"/><line x1="23" y1="10" x2="27" y2="10"/></g><path d="M5,11 C8,5 20,5 23,11 L20,11 C17,9 11,9 8,11 Z" fill="#1c1c1c"/><ellipse cx="14" cy="10" rx="8.5" ry="3.2" fill="#2a2a2a"/><circle cx="14" cy="12.5" r="4" fill="#1a1a1a"/><path d="M7,14 C10,18.5 18,18.5 21,14" stroke="#bdbdbd" stroke-width="2" fill="none"/></svg><div class="sw" style="background:#8a28d8"></div></div>
<div class="row" style="top:712px"><svg width="30" height="26" style="left:55px;top:5px" viewBox="0 0 30 26"><path d="M1.5,13 C1,7 7,2.5 15,2.5 C23,2.5 29,6 29,12 C29,16.5 27,19 24.5,19 L23.5,24.5 L18.5,24.5 L18,19.5 C13,20.5 7,19.5 3.5,17.5 Z" fill="#1e1e1e"/><path d="M5,10 L10,9 L12,12 L17,11 M8,15 L13,14 L15,16 L20,15.5 M17,6 L21,7 L23,10 M22,13 L24,16" stroke="#c8c8c8" stroke-width="1.4" fill="none"/></svg><div class="rt" style="letter-spacing:-0.75px">DL_AORTA</div><svg width="28" height="22" style="left:904px;top:6px" viewBox="0 0 28 22"><g stroke="#777" stroke-width="1.6"><line x1="14" y1="0.5" x2="14" y2="4"/><line x1="9" y1="2" x2="10" y2="5"/><line x1="19" y1="2" x2="18" y2="5"/><line x1="1" y1="10" x2="5" y2="10"/><line x1="23" y1="10" x2="27" y2="10"/></g><path d="M5,11 C8,5 20,5 23,11 L20,11 C17,9 11,9 8,11 Z" fill="#1c1c1c"/><ellipse cx="14" cy="10" rx="8.5" ry="3.2" fill="#2a2a2a"/><circle cx="14" cy="12.5" r="4" fill="#1a1a1a"/><path d="M7,14 C10,18.5 18,18.5 21,14" stroke="#bdbdbd" stroke-width="2" fill="none"/></svg><div class="sw" style="background:#64d400"></div></div>
<div class="row" style="top:748px"><svg width="30" height="26" style="left:55px;top:5px" viewBox="0 0 30 26"><path d="M1.5,13 C1,7 7,2.5 15,2.5 C23,2.5 29,6 29,12 C29,16.5 27,19 24.5,19 L23.5,24.5 L18.5,24.5 L18,19.5 C13,20.5 7,19.5 3.5,17.5 Z" fill="#1e1e1e"/><path d="M5,10 L10,9 L12,12 L17,11 M8,15 L13,14 L15,16 L20,15.5 M17,6 L21,7 L23,10 M22,13 L24,16" stroke="#c8c8c8" stroke-width="1.4" fill="none"/></svg><div class="rt" style="letter-spacing:-1.37px">DL_LA</div><svg width="28" height="22" style="left:904px;top:6px" viewBox="0 0 28 22"><g stroke="#777" stroke-width="1.6"><line x1="14" y1="0.5" x2="14" y2="4"/><line x1="9" y1="2" x2="10" y2="5"/><line x1="19" y1="2" x2="18" y2="5"/><line x1="1" y1="10" x2="5" y2="10"/><line x1="23" y1="10" x2="27" y2="10"/></g><path d="M5,11 C8,5 20,5 23,11 L20,11 C17,9 11,9 8,11 Z" fill="#1c1c1c"/><ellipse cx="14" cy="10" rx="8.5" ry="3.2" fill="#2a2a2a"/><circle cx="14" cy="12.5" r="4" fill="#1a1a1a"/><path d="M7,14 C10,18.5 18,18.5 21,14" stroke="#bdbdbd" stroke-width="2" fill="none"/></svg><div class="sw" style="background:#3c28d2"></div></div>
<div class="row" style="top:784px"><svg width="30" height="26" style="left:55px;top:5px" viewBox="0 0 30 26"><path d="M1.5,13 C1,7 7,2.5 15,2.5 C23,2.5 29,6 29,12 C29,16.5 27,19 24.5,19 L23.5,24.5 L18.5,24.5 L18,19.5 C13,20.5 7,19.5 3.5,17.5 Z" fill="#1e1e1e"/><path d="M5,10 L10,9 L12,12 L17,11 M8,15 L13,14 L15,16 L20,15.5 M17,6 L21,7 L23,10 M22,13 L24,16" stroke="#c8c8c8" stroke-width="1.4" fill="none"/></svg><div class="rt" style="letter-spacing:-1.52px">DL_LV</div><svg width="28" height="22" style="left:904px;top:6px" viewBox="0 0 28 22"><g stroke="#777" stroke-width="1.6"><line x1="14" y1="0.5" x2="14" y2="4"/><line x1="9" y1="2" x2="10" y2="5"/><line x1="19" y1="2" x2="18" y2="5"/><line x1="1" y1="10" x2="5" y2="10"/><line x1="23" y1="10" x2="27" y2="10"/></g><path d="M5,11 C8,5 20,5 23,11 L20,11 C17,9 11,9 8,11 Z" fill="#1c1c1c"/><ellipse cx="14" cy="10" rx="8.5" ry="3.2" fill="#2a2a2a"/><circle cx="14" cy="12.5" r="4" fill="#1a1a1a"/><path d="M7,14 C10,18.5 18,18.5 21,14" stroke="#bdbdbd" stroke-width="2" fill="none"/></svg><div class="sw" style="background:#c8c800"></div></div>
<div class="row" style="top:820px"><svg width="30" height="26" style="left:55px;top:5px" viewBox="0 0 30 26"><path d="M1.5,13 C1,7 7,2.5 15,2.5 C23,2.5 29,6 29,12 C29,16.5 27,19 24.5,19 L23.5,24.5 L18.5,24.5 L18,19.5 C13,20.5 7,19.5 3.5,17.5 Z" fill="#1e1e1e"/><path d="M5,10 L10,9 L12,12 L17,11 M8,15 L13,14 L15,16 L20,15.5 M17,6 L21,7 L23,10 M22,13 L24,16" stroke="#c8c8c8" stroke-width="1.4" fill="none"/></svg><div class="rt" style="letter-spacing:-2.05px">DL_RA</div><svg width="28" height="22" style="left:904px;top:6px" viewBox="0 0 28 22"><g stroke="#777" stroke-width="1.6"><line x1="14" y1="0.5" x2="14" y2="4"/><line x1="9" y1="2" x2="10" y2="5"/><line x1="19" y1="2" x2="18" y2="5"/><line x1="1" y1="10" x2="5" y2="10"/><line x1="23" y1="10" x2="27" y2="10"/></g><path d="M5,11 C8,5 20,5 23,11 L20,11 C17,9 11,9 8,11 Z" fill="#1c1c1c"/><ellipse cx="14" cy="10" rx="8.5" ry="3.2" fill="#2a2a2a"/><circle cx="14" cy="12.5" r="4" fill="#1a1a1a"/><path d="M7,14 C10,18.5 18,18.5 21,14" stroke="#bdbdbd" stroke-width="2" fill="none"/></svg><div class="sw" style="background:#00cccc"></div></div>
<div class="row" style="top:856px"><svg width="30" height="26" style="left:55px;top:5px" viewBox="0 0 30 26"><path d="M1.5,13 C1,7 7,2.5 15,2.5 C23,2.5 29,6 29,12 C29,16.5 27,19 24.5,19 L23.5,24.5 L18.5,24.5 L18,19.5 C13,20.5 7,19.5 3.5,17.5 Z" fill="#1e1e1e"/><path d="M5,10 L10,9 L12,12 L17,11 M8,15 L13,14 L15,16 L20,15.5 M17,6 L21,7 L23,10 M22,13 L24,16" stroke="#c8c8c8" stroke-width="1.4" fill="none"/></svg><div class="rt" style="letter-spacing:-1.94px">DL_RV</div><svg width="28" height="22" style="left:904px;top:6px" viewBox="0 0 28 22"><g stroke="#777" stroke-width="1.6"><line x1="14" y1="0.5" x2="14" y2="4"/><line x1="9" y1="2" x2="10" y2="5"/><line x1="19" y1="2" x2="18" y2="5"/><line x1="1" y1="10" x2="5" y2="10"/><line x1="23" y1="10" x2="27" y2="10"/></g><path d="M5,11 C8,5 20,5 23,11 L20,11 C17,9 11,9 8,11 Z" fill="#1c1c1c"/><ellipse cx="14" cy="10" rx="8.5" ry="3.2" fill="#2a2a2a"/><circle cx="14" cy="12.5" r="4" fill="#1a1a1a"/><path d="M7,14 C10,18.5 18,18.5 21,14" stroke="#bdbdbd" stroke-width="2" fill="none"/></svg><div class="sw" style="background:#808080"></div></div>
<div class="row" style="top:892px"><svg width="30" height="26" style="left:55px;top:5px" viewBox="0 0 30 26"><path d="M1.5,13 C1,7 7,2.5 15,2.5 C23,2.5 29,6 29,12 C29,16.5 27,19 24.5,19 L23.5,24.5 L18.5,24.5 L18,19.5 C13,20.5 7,19.5 3.5,17.5 Z" fill="#1e1e1e"/><path d="M5,10 L10,9 L12,12 L17,11 M8,15 L13,14 L15,16 L20,15.5 M17,6 L21,7 L23,10 M22,13 L24,16" stroke="#c8c8c8" stroke-width="1.4" fill="none"/></svg><div class="rt" style="letter-spacing:-1.38px">DL_IVC</div><svg width="28" height="22" style="left:904px;top:6px" viewBox="0 0 28 22"><g stroke="#777" stroke-width="1.6"><line x1="14" y1="0.5" x2="14" y2="4"/><line x1="9" y1="2" x2="10" y2="5"/><line x1="19" y1="2" x2="18" y2="5"/><line x1="1" y1="10" x2="5" y2="10"/><line x1="23" y1="10" x2="27" y2="10"/></g><path d="M5,11 C8,5 20,5 23,11 L20,11 C17,9 11,9 8,11 Z" fill="#1c1c1c"/><ellipse cx="14" cy="10" rx="8.5" ry="3.2" fill="#2a2a2a"/><circle cx="14" cy="12.5" r="4" fill="#1a1a1a"/><path d="M7,14 C10,18.5 18,18.5 21,14" stroke="#bdbdbd" stroke-width="2" fill="none"/></svg><div class="sw" style="background:#0080d8"></div></div>
<div class="row" style="top:928px"><svg width="30" height="26" style="left:55px;top:5px" viewBox="0 0 30 26"><path d="M1.5,13 C1,7 7,2.5 15,2.5 C23,2.5 29,6 29,12 C29,16.5 27,19 24.5,19 L23.5,24.5 L18.5,24.5 L18,19.5 C13,20.5 7,19.5 3.5,17.5 Z" fill="#1e1e1e"/><path d="M5,10 L10,9 L12,12 L17,11 M8,15 L13,14 L15,16 L20,15.5 M17,6 L21,7 L23,10 M22,13 L24,16" stroke="#c8c8c8" stroke-width="1.4" fill="none"/></svg><div class="rt" style="letter-spacing:-1.52px">DL_SVC</div><svg width="28" height="22" style="left:904px;top:6px" viewBox="0 0 28 22"><g stroke="#777" stroke-width="1.6"><line x1="14" y1="0.5" x2="14" y2="4"/><line x1="9" y1="2" x2="10" y2="5"/><line x1="19" y1="2" x2="18" y2="5"/><line x1="1" y1="10" x2="5" y2="10"/><line x1="23" y1="10" x2="27" y2="10"/></g><path d="M5,11 C8,5 20,5 23,11 L20,11 C17,9 11,9 8,11 Z" fill="#1c1c1c"/><ellipse cx="14" cy="10" rx="8.5" ry="3.2" fill="#2a2a2a"/><circle cx="14" cy="12.5" r="4" fill="#1a1a1a"/><path d="M7,14 C10,18.5 18,18.5 21,14" stroke="#bdbdbd" stroke-width="2" fill="none"/></svg><div class="sw" style="background:#00d07c"></div></div>
<div class="row" style="top:964px"><svg width="30" height="26" style="left:55px;top:5px" viewBox="0 0 30 26"><path d="M1.5,13 C1,7 7,2.5 15,2.5 C23,2.5 29,6 29,12 C29,16.5 27,19 24.5,19 L23.5,24.5 L18.5,24.5 L18,19.5 C13,20.5 7,19.5 3.5,17.5 Z" fill="#1e1e1e"/><path d="M5,10 L10,9 L12,12 L17,11 M8,15 L13,14 L15,16 L20,15.5 M17,6 L21,7 L23,10 M22,13 L24,16" stroke="#c8c8c8" stroke-width="1.4" fill="none"/></svg><div class="rt" style="letter-spacing:-1.73px">DL_PA</div><svg width="28" height="22" style="left:904px;top:6px" viewBox="0 0 28 22"><g stroke="#777" stroke-width="1.6"><line x1="14" y1="0.5" x2="14" y2="4"/><line x1="9" y1="2" x2="10" y2="5"/><line x1="19" y1="2" x2="18" y2="5"/><line x1="1" y1="10" x2="5" y2="10"/><line x1="23" y1="10" x2="27" y2="10"/></g><path d="M5,11 C8,5 20,5 23,11 L20,11 C17,9 11,9 8,11 Z" fill="#1c1c1c"/><ellipse cx="14" cy="10" rx="8.5" ry="3.2" fill="#2a2a2a"/><circle cx="14" cy="12.5" r="4" fill="#1a1a1a"/><path d="M7,14 C10,18.5 18,18.5 21,14" stroke="#bdbdbd" stroke-width="2" fill="none"/></svg><div class="sw" style="background:#d87818"></div></div>
<div class="row" style="top:1000px"><svg width="30" height="26" style="left:55px;top:5px" viewBox="0 0 30 26"><path d="M1.5,13 C1,7 7,2.5 15,2.5 C23,2.5 29,6 29,12 C29,16.5 27,19 24.5,19 L23.5,24.5 L18.5,24.5 L18,19.5 C13,20.5 7,19.5 3.5,17.5 Z" fill="#1e1e1e"/><path d="M5,10 L10,9 L12,12 L17,11 M8,15 L13,14 L15,16 L20,15.5 M17,6 L21,7 L23,10 M22,13 L24,16" stroke="#c8c8c8" stroke-width="1.4" fill="none"/></svg><div class="rt" style="letter-spacing:-0.97px">DL_HEART_MT</div><svg width="28" height="22" style="left:904px;top:6px" viewBox="0 0 28 22"><g stroke="#777" stroke-width="1.6"><line x1="14" y1="0.5" x2="14" y2="4"/><line x1="9" y1="2" x2="10" y2="5"/><line x1="19" y1="2" x2="18" y2="5"/><line x1="1" y1="10" x2="5" y2="10"/><line x1="23" y1="10" x2="27" y2="10"/></g><path d="M5,11 C8,5 20,5 23,11 L20,11 C17,9 11,9 8,11 Z" fill="#1c1c1c"/><ellipse cx="14" cy="10" rx="8.5" ry="3.2" fill="#2a2a2a"/><circle cx="14" cy="12.5" r="4" fill="#1a1a1a"/><path d="M7,14 C10,18.5 18,18.5 21,14" stroke="#bdbdbd" stroke-width="2" fill="none"/></svg><div class="sw" style="background:#dc1478"></div></div>
<div class="row" style="top:1036px"><svg width="30" height="26" style="left:55px;top:5px" viewBox="0 0 30 26"><path d="M1.5,13 C1,7 7,2.5 15,2.5 C23,2.5 29,6 29,12 C29,16.5 27,19 24.5,19 L23.5,24.5 L18.5,24.5 L18,19.5 C13,20.5 7,19.5 3.5,17.5 Z" fill="#1e1e1e"/><path d="M5,10 L10,9 L12,12 L17,11 M8,15 L13,14 L15,16 L20,15.5 M17,6 L21,7 L23,10 M22,13 L24,16" stroke="#c8c8c8" stroke-width="1.4" fill="none"/></svg><div class="rt" style="letter-spacing:-1.0px">DL_ATRIA</div><svg width="28" height="22" style="left:904px;top:6px" viewBox="0 0 28 22"><g stroke="#777" stroke-width="1.6"><line x1="14" y1="0.5" x2="14" y2="4"/><line x1="9" y1="2" x2="10" y2="5"/><line x1="19" y1="2" x2="18" y2="5"/><line x1="1" y1="10" x2="5" y2="10"/><line x1="23" y1="10" x2="27" y2="10"/></g><path d="M5,11 C8,5 20,5 23,11 L20,11 C17,9 11,9 8,11 Z" fill="#1c1c1c"/><ellipse cx="14" cy="10" rx="8.5" ry="3.2" fill="#2a2a2a"/><circle cx="14" cy="12.5" r="4" fill="#1a1a1a"/><path d="M7,14 C10,18.5 18,18.5 21,14" stroke="#bdbdbd" stroke-width="2" fill="none"/></svg><div class="sw" style="background:#8a28d8"></div></div>
<div class="row" style="top:1072px"><svg width="30" height="26" style="left:55px;top:5px" viewBox="0 0 30 26"><path d="M1.5,13 C1,7 7,2.5 15,2.5 C23,2.5 29,6 29,12 C29,16.5 27,19 24.5,19 L23.5,24.5 L18.5,24.5 L18,19.5 C13,20.5 7,19.5 3.5,17.5 Z" fill="#1e1e1e"/><path d="M5,10 L10,9 L12,12 L17,11 M8,15 L13,14 L15,16 L20,15.5 M17,6 L21,7 L23,10 M22,13 L24,16" stroke="#c8c8c8" stroke-width="1.4" fill="none"/></svg><div class="rt" style="letter-spacing:-0.79px">DL_PERICARDIUM</div><svg width="28" height="22" style="left:904px;top:6px" viewBox="0 0 28 22"><g stroke="#777" stroke-width="1.6"><line x1="14" y1="0.5" x2="14" y2="4"/><line x1="9" y1="2" x2="10" y2="5"/><line x1="19" y1="2" x2="18" y2="5"/><line x1="1" y1="10" x2="5" y2="10"/><line x1="23" y1="10" x2="27" y2="10"/></g><path d="M5,11 C8,5 20,5 23,11 L20,11 C17,9 11,9 8,11 Z" fill="#1c1c1c"/><ellipse cx="14" cy="10" rx="8.5" ry="3.2" fill="#2a2a2a"/><circle cx="14" cy="12.5" r="4" fill="#1a1a1a"/><path d="M7,14 C10,18.5 18,18.5 21,14" stroke="#bdbdbd" stroke-width="2" fill="none"/></svg><div class="sw" style="background:#64d400"></div></div>
<div class="row" style="top:1108px"><svg width="30" height="26" style="left:55px;top:5px" viewBox="0 0 30 26"><path d="M1.5,13 C1,7 7,2.5 15,2.5 C23,2.5 29,6 29,12 C29,16.5 27,19 24.5,19 L23.5,24.5 L18.5,24.5 L18,19.5 C13,20.5 7,19.5 3.5,17.5 Z" fill="#1e1e1e"/><path d="M5,10 L10,9 L12,12 L17,11 M8,15 L13,14 L15,16 L20,15.5 M17,6 L21,7 L23,10 M22,13 L24,16" stroke="#c8c8c8" stroke-width="1.4" fill="none"/></svg><div class="rt" style="letter-spacing:-1.08px">DL_VENTRICLES</div><svg width="28" height="22" style="left:904px;top:6px" viewBox="0 0 28 22"><g stroke="#777" stroke-width="1.6"><line x1="14" y1="0.5" x2="14" y2="4"/><line x1="9" y1="2" x2="10" y2="5"/><line x1="19" y1="2" x2="18" y2="5"/><line x1="1" y1="10" x2="5" y2="10"/><line x1="23" y1="10" x2="27" y2="10"/></g><path d="M5,11 C8,5 20,5 23,11 L20,11 C17,9 11,9 8,11 Z" fill="#1c1c1c"/><ellipse cx="14" cy="10" rx="8.5" ry="3.2" fill="#2a2a2a"/><circle cx="14" cy="12.5" r="4" fill="#1a1a1a"/><path d="M7,14 C10,18.5 18,18.5 21,14" stroke="#bdbdbd" stroke-width="2" fill="none"/></svg><div class="sw" style="background:#3c28d2"></div></div>
<div class="row" style="top:1144px"><svg width="32" height="32" style="left:30px;top:2px" viewBox="0 0 32 32"><defs><pattern id="p3a3a3a" width="3" height="3" patternUnits="userSpaceOnUse"><rect width="3" height="3" fill="#3a3a3a"/><rect width="1.5" height="1.5" fill="#9a9a9a"/></pattern></defs><path d="M16,2 L30,8 L30,24 L16,31 L2,24 L2,8 Z" fill="url(#p3a3a3a)"/><path d="M16,2 L30,8 L16,14 L2,8 Z" fill="#fff" opacity="0.25"/><path d="M16,14 L30,8 L30,24 L16,31 Z" fill="#000" opacity="0.2"/></svg><div class="rt" style="left:75px;letter-spacing:0.68px">CTs from rtog conversion</div><svg width="30" height="32" style="left:902px;top:2px" viewBox="0 0 30 32"><rect x="2" y="12" width="18" height="18" fill="#444"/><rect x="5" y="8" width="18" height="18" fill="#666"/><path d="M10,9 C14,2 26,2 29,8 C26,13 14,13 10,9 Z" fill="#333"/><g stroke="#999" stroke-width="1"><line x1="2" y1="17" x2="20" y2="17"/><line x1="2" y1="22" x2="20" y2="22"/><line x1="2" y1="27" x2="20" y2="27"/></g></svg><svg width="22" height="22" style="left:996px;top:7px" viewBox="0 0 22 22"><g stroke="#777" stroke-width="1.6" fill="none"><rect x="1" y="1" width="20" height="20"/><line x1="7.7" y1="1" x2="7.7" y2="21"/><line x1="14.3" y1="1" x2="14.3" y2="21"/><line x1="1" y1="7.7" x2="21" y2="7.7"/><line x1="1" y1="14.3" x2="21" y2="14.3"/></g></svg></div>
<div class="row" style="top:1180px;background:#dcdcdc"><svg width="32" height="32" style="left:30px;top:2px" viewBox="0 0 32 32"><defs><pattern id="p6a88a8" width="3" height="3" patternUnits="userSpaceOnUse"><rect width="3" height="3" fill="#6a88a8"/><rect width="1.5" height="1.5" fill="#d0dcec"/></pattern></defs><path d="M16,2 L30,8 L30,24 L16,31 L2,24 L2,8 Z" fill="url(#p6a88a8)"/><path d="M16,2 L30,8 L16,14 L2,8 Z" fill="#fff" opacity="0.25"/><path d="M16,14 L30,8 L30,24 L16,31 Z" fill="#000" opacity="0.2"/></svg><div class="rt" style="left:75px;letter-spacing:0.57px">dose</div><svg width="30" height="32" style="left:902px;top:2px" viewBox="0 0 30 32"><rect x="2" y="12" width="18" height="18" fill="#5a7088"/><rect x="5" y="8" width="18" height="18" fill="#7890a8"/><path d="M10,9 C14,2 26,2 29,8 C26,13 14,13 10,9 Z" fill="#4a6078"/><g stroke="#999" stroke-width="1"><line x1="2" y1="17" x2="20" y2="17"/><line x1="2" y1="22" x2="20" y2="22"/><line x1="2" y1="27" x2="20" y2="27"/></g></svg><svg width="22" height="22" style="left:996px;top:7px" viewBox="0 0 22 22"><g stroke="#777" stroke-width="1.6" fill="none"><rect x="1" y="1" width="20" height="20"/><line x1="7.7" y1="1" x2="7.7" y2="21"/><line x1="14.3" y1="1" x2="14.3" y2="21"/><line x1="1" y1="7.7" x2="21" y2="7.7"/><line x1="1" y1="14.3" x2="21" y2="14.3"/></g></svg></div>

<!-- checkboxes -->
<div class="a" style="left:6px;top:1239px;width:28px;height:27px;border:2px solid #b4b4b4;background:#fff;border-radius:2px"></div>
<svg width="30" height="30" style="left:6px;top:1238px" viewBox="0 0 30 30"><path d="M7,14 L12,22 L22,5" fill="none" stroke="#222" stroke-width="3.2"/></svg>
<div class="t" style="left:44px;top:1240px;font-size:27px;color:#222">Show transforms</div>
<div class="a" style="left:260px;top:1239px;width:28px;height:27px;border:2px solid #b4b4b4;background:#fff;border-radius:2px"></div>
<div class="t" style="left:298px;top:1240.5px;font-size:26.2px;color:#222">Show MRML ID's</div>
<svg width="46" height="46" style="left:1020px;top:1230px" viewBox="0 0 46 46">
 <circle cx="23" cy="23" r="20" fill="#fff" stroke="#f0960a" stroke-width="3"/>
 <circle cx="23" cy="23" r="15" fill="#f49a10"/>
 <path d="M17,18 C17,12 29,12 29,18 C29,23 23,23 23,27" fill="none" stroke="#fff" stroke-width="4"/>
 <circle cx="23" cy="32" r="2.5" fill="#fff"/>
</svg>
<div class="arr" style="left:18px;top:1292px"></div>
<div class="t" style="left:44.6px;top:1288px;font-size:27.05px;color:#222">Subject hierarchy item information</div>
<div class="a" style="left:8px;top:1324px;width:1057px;height:22px;border:2px solid #dedede;border-radius:4px;background:#f2f2f2"></div>
<!-- filter -->
<div class="t" style="left:-1px;top:1373px;font-size:26px;color:#222">Filter:</div>
<div class="a" style="left:77px;top:1363px;width:996px;height:47px;border:2px solid #a9a9a9;border-radius:5px;background:#fff"></div>
<div class="arr" style="left:9px;top:1426px"></div>
<div class="t" style="left:36.8px;top:1422px;font-size:26.7px;color:#111">MRML node information</div>
<div class="a" style="left:1px;top:1459px;width:1072px;height:22px;border:2px solid #d4d4d4;border-radius:4px;background:#e8e8e8"></div>
<div class="box" style="left:-2px;top:1493px;width:1075px;height:47px"></div>
<div class="arr" style="left:18px;top:1508px"></div>
<div class="t" style="left:47.4px;top:1503px;font-size:26px;color:#222">Data Probe</div>


<!-- VIEWS -->

<div class="a" style="left:1072px;top:113px;width:1806px;height:3px;background:#f4f4f4"></div>
<div class="a" style="left:1086px;top:116px;width:1792px;height:1452px;background:#eceef2"></div>
<div class="a" style="left:1086px;top:148px;width:896px;height:694px;background:#000;overflow:hidden" id="redv"><svg width="896" height="694" style="left:0;top:0" viewBox="1086 148 896 694">
<defs>
 <filter id="rb3" x="-20%" y="-20%" width="140%" height="140%"><feGaussianBlur stdDeviation="3"/></filter>
 <filter id="rb6" x="-20%" y="-20%" width="140%" height="140%"><feGaussianBlur stdDeviation="6"/></filter>
 <filter id="rb10" x="-30%" y="-30%" width="160%" height="160%"><feGaussianBlur stdDeviation="10"/></filter>
 <filter id="rb25" x="-50%" y="-50%" width="200%" height="200%"><feGaussianBlur stdDeviation="25"/></filter>
 <radialGradient id="rglow" cx="1545" cy="440" r="330" gradientUnits="userSpaceOnUse" gradientTransform="translate(1545 440) scale(1.0 1.05) translate(-1545 -440)">
  <stop offset="0" stop-color="#806a00"/><stop offset="0.35" stop-color="#6e5400"/><stop offset="0.6" stop-color="#723600"/><stop offset="0.85" stop-color="#721400"/><stop offset="1" stop-color="#700000"/></radialGradient>
 <linearGradient id="rbody" x1="1270" y1="0" x2="1810" y2="0" gradientUnits="userSpaceOnUse">
  <stop offset="0" stop-color="#d88a6a"/><stop offset="0.2" stop-color="#d89868"/><stop offset="0.3" stop-color="#c8b050"/><stop offset="0.42" stop-color="#90c840"/><stop offset="0.52" stop-color="#40d048"/><stop offset="0.75" stop-color="#30c850"/><stop offset="1" stop-color="#58c848"/></linearGradient>
 <clipPath id="rclip"><polygon points="1269.8,428.3 1274.7,391.2 1299.4,373.9 1348.9,361.6 1398.3,341.8 1447.8,329.4 1521.9,327.0 1596.1,327.0 1670.3,349.2 1719.7,373.9 1781.5,391.2 1806.2,418.4 1808.7,453.1 1798.8,502.5 1781.5,539.6 1744.4,564.3 1670.3,596.4 1596.1,613.7 1521.9,613.7 1447.8,603.9 1386.0,601.4 1348.9,576.7 1311.8,527.2 1279.7,502.5 1272.2,477.8 1277.2,472.8"/></clipPath>
</defs>
<rect x="1187" y="148" width="695" height="694" fill="url(#rglow)"/>
<polygon points="1354.2,572.7 1786.9,563.1 1767.7,620.8 1710.0,765.0 1421.5,765.0 1383.1,620.8" fill="#747000" filter="url(#rb25)" opacity="0.85"/>
<polygon points="1556.2,582.3 1758.1,572.7 1729.2,668.8 1690.8,755.4 1594.6,755.4 1565.8,668.8" fill="#107a00" filter="url(#rb25)" opacity="0.85"/>
<polygon points="1383.1,620.8 1517.7,620.8 1498.5,731.3 1411.9,731.3" fill="#9a8010" filter="url(#rb25)" opacity="0.4"/>
<polygon points="1269.8,428.3 1274.7,391.2 1299.4,373.9 1348.9,361.6 1398.3,341.8 1447.8,329.4 1521.9,327.0 1596.1,327.0 1670.3,349.2 1719.7,373.9 1781.5,391.2 1806.2,418.4 1808.7,453.1 1798.8,502.5 1781.5,539.6 1744.4,564.3 1670.3,596.4 1596.1,613.7 1521.9,613.7 1447.8,603.9 1386.0,601.4 1348.9,576.7 1311.8,527.2 1279.7,502.5 1272.2,477.8 1277.2,472.8" fill="#c0b030" filter="url(#rb10)" opacity="0.6"/>
<polygon points="1269.8,428.3 1274.7,391.2 1299.4,373.9 1348.9,361.6 1398.3,341.8 1447.8,329.4 1521.9,327.0 1596.1,327.0 1670.3,349.2 1719.7,373.9 1781.5,391.2 1806.2,418.4 1808.7,453.1 1798.8,502.5 1781.5,539.6 1744.4,564.3 1670.3,596.4 1596.1,613.7 1521.9,613.7 1447.8,603.9 1386.0,601.4 1348.9,576.7 1311.8,527.2 1279.7,502.5 1272.2,477.8 1277.2,472.8" fill="url(#rbody)"/>
<g clip-path="url(#rclip)">
 <g opacity="0.22" stroke="#ff9090" stroke-width="7">
  <line x1="1280" y1="400" x2="1400" y2="440"/><line x1="1275" y1="430" x2="1395" y2="470"/><line x1="1275" y1="465" x2="1390" y2="500"/><line x1="1290" y1="505" x2="1395" y2="535"/><line x1="1320" y1="545" x2="1405" y2="570"/>
 </g>
 <ellipse cx="1700" cy="600" rx="120" ry="50" fill="#006a10" filter="url(#rb25)" opacity="0.8"/>
 <ellipse cx="1600" cy="575" rx="60" ry="25" fill="#30d0d0" filter="url(#rb10)" opacity="0.7"/>
 <ellipse cx="1640" cy="330" rx="90" ry="18" fill="#50e0c0" filter="url(#rb10)" opacity="0.5"/>
 <path d="M1650,405 C1675,440 1680,500 1655,530" fill="none" stroke="#a040e0" stroke-width="12" filter="url(#rb3)"/>
 <path d="M1672,400 C1700,440 1705,510 1670,545 C1640,575 1600,585 1560,580" fill="none" stroke="#30d8d8" stroke-width="12" filter="url(#rb6)" opacity="0.9"/>
 <ellipse cx="1330" cy="540" rx="30" ry="40" fill="none" stroke="#f0d080" stroke-width="4" filter="url(#rb3)" opacity="0.5"/>
</g>
<polygon points="1269.8,428.3 1274.7,391.2 1299.4,373.9 1348.9,361.6 1398.3,341.8 1447.8,329.4 1521.9,327.0 1596.1,327.0 1670.3,349.2 1719.7,373.9 1781.5,391.2 1806.2,418.4 1808.7,453.1 1798.8,502.5 1781.5,539.6 1744.4,564.3 1670.3,596.4 1596.1,613.7 1521.9,613.7 1447.8,603.9 1386.0,601.4 1348.9,576.7 1311.8,527.2 1279.7,502.5 1272.2,477.8 1277.2,472.8" fill="none" stroke="#e8d070" stroke-width="2.5" opacity="0.7" filter="url(#rb3)"/>
<polygon points="1675.2,418.4 1695.0,373.9 1719.7,376.4 1756.8,383.8 1793.9,398.7 1807.5,428.3 1807.5,458.0 1793.9,490.1 1781.5,527.2 1749.4,530.9 1719.7,517.3 1695.0,490.1 1675.2,458.0" fill="#58d858" stroke="#70e878" stroke-width="1.5"/>
<polygon points="1559.0,369.0 1576.3,362.8 1601.1,366.5 1625.8,386.3 1645.6,408.6 1660.4,433.3 1660.4,477.8 1655.4,514.9 1640.6,539.6 1620.8,559.4 1596.1,569.2 1571.4,566.8 1551.6,556.9 1549.1,537.1 1568.9,517.3 1576.3,413.5 1559.0,378.9" fill="#dcc0d0" stroke="#f0b0e0" stroke-width="2"/>
<polygon points="1395.9,433.3 1410.7,403.6 1432.9,383.8 1467.6,364.1 1517.0,364.1 1551.6,367.8 1556.6,373.9 1526.9,393.7 1507.1,418.4 1499.7,440.7 1504.6,467.9 1521.9,497.6 1509.6,514.9 1497.2,544.5 1472.5,566.8 1447.8,566.8 1418.1,547.0 1400.8,514.9 1395.9,477.8" fill="#c4bcc8" stroke="#f0c0e8" stroke-width="2"/>
<polygon points="1581.3,425.9 1615.9,414.7 1645.6,420.9 1660.4,438.2 1657.9,477.8 1645.6,497.6 1608.5,512.4 1576.3,509.9 1571.4,472.8 1578.8,440.7" fill="#98a0d8" stroke="#2a80e8" stroke-width="2"/>
<ellipse cx="1610" cy="466" rx="19" ry="30" fill="#5a8ee0" stroke="#3a90f0" stroke-width="1.2"/>
<polygon points="1521.9,408.6 1556.6,381.4 1576.3,418.4 1578.8,440.7 1546.7,453.1 1517.0,453.1" fill="#60b840" stroke="#50d030" stroke-width="1.5" opacity="0.9"/>
<circle cx="1527" cy="428" r="21" fill="#68c838" stroke="#60d030" stroke-width="1.5"/>
<circle cx="1510" cy="448" r="11" fill="#58c030" stroke="#60d030" stroke-width="1.2"/>
<ellipse cx="1561" cy="463" rx="20" ry="37" fill="#a8a848" stroke="#c8a040" stroke-width="1.5"/>
<polygon points="1509.6,475.3 1541.7,482.7 1576.3,512.4 1571.4,519.8 1546.7,497.6 1512.1,485.2" fill="#9a1890" stroke="#e02080" stroke-width="1.5"/>
<rect x="1533" y="495" width="11" height="9" fill="#d8e8f0" stroke="#fff" stroke-width="1.5"/>
<circle cx="1550" cy="519" r="13" fill="#809850" stroke="#70c040" stroke-width="1.2"/>
<circle cx="1521" cy="549" r="14" fill="#e0d860" opacity="0.7"/>
<circle cx="1521" cy="549" r="8" fill="#d08838" stroke="#d07020" stroke-width="1"/>
<rect x="1234.0" y="637.6" width="610.6" height="24.0" rx="4" fill="#a0a020" fill-opacity="0.3" stroke="#e8c878" stroke-width="2"/>
<polygon points="1306.2,665.0 1772.5,665.0 1686.0,731.3 1392.7,731.3" fill="none" stroke="#e8c878" stroke-width="2.5"/>
</svg>
<div class="vtxt" style="left:4px;top:600px">F: dose (40%)
B: CTs from rtog conversion</div></div>
<div class="a" style="left:1984px;top:148px;width:894px;height:694px;background:linear-gradient(#7478be,#c2c3e8);overflow:hidden" id="v3d"><svg width="894" height="694" style="left:0;top:0" viewBox="1984 148 894 694">
<g stroke="#f010f0" stroke-width="1.5" fill="none">
<rect x="2107.5" y="172" width="647" height="646"/>
<rect x="2215.6" y="279.5" width="430.6" height="430.5"/>
<line x1="2107.5" y1="172" x2="2215.6" y2="279.5"/><line x1="2754.5" y1="172" x2="2646.2" y2="279.5"/>
<line x1="2107.5" y1="818" x2="2215.6" y2="710"/><line x1="2754.5" y1="818" x2="2646.2" y2="710"/>
</g>
<g fill="#fff" font-family="Liberation Sans">
<text x="2419" y="211" font-size="42">S</text>
<text x="2122" y="508" font-size="39">R</text>
<text x="2718" y="508" font-size="39">L</text>
<text x="2423" y="506" font-size="32">P</text>
<rect x="2423" y="778" width="5" height="28"/>
</g>
</svg></div>
<div class="a" style="left:1086px;top:876px;width:896px;height:692px;background:#000;overflow:hidden" id="greenv"><svg width="896" height="692" style="left:0;top:0" viewBox="1086 876 896 692">
<defs>
 <filter id="gb3" x="-20%" y="-20%" width="140%" height="140%"><feGaussianBlur stdDeviation="3"/></filter>
 <filter id="gb8" x="-30%" y="-30%" width="160%" height="160%"><feGaussianBlur stdDeviation="8"/></filter>
 <filter id="gb20" x="-50%" y="-50%" width="200%" height="200%"><feGaussianBlur stdDeviation="20"/></filter>
 <filter id="gb40" x="-80%" y="-80%" width="260%" height="260%"><feGaussianBlur stdDeviation="40"/></filter>
 <clipPath id="gclip"><polygon points="1140.0,905.0 1286.0,905.0 1348.6,921.0 1394.0,970.0 1404.6,978.8 1422.0,959.5 1432.6,928.0 1436.0,905.0 1611.0,905.0 1639.0,964.8 1681.0,905.0 1905.0,905.0 1905.0,1005.0 1902.0,1050.6 1856.0,1075.0 1860.0,1145.0 1863.0,1250.0 1835.0,1303.0 1777.0,1360.8 1792.0,1538.0 1292.0,1538.0 1287.0,1385.0 1229.0,1312.7 1201.5,1250.0 1180.5,1180.0 1184.0,1110.0 1138.5,1047.0 1124.5,1005.0 1131.5,935.0"/></clipPath>
</defs>
<rect x="1086" y="905" width="896" height="633" fill="#710000"/>
<ellipse cx="1900" cy="1210" rx="90" ry="120" fill="#8a3a00" filter="url(#gb40)" opacity="0.7"/>
<polygon points="1140.0,905.0 1286.0,905.0 1348.6,921.0 1394.0,970.0 1404.6,978.8 1422.0,959.5 1432.6,928.0 1436.0,905.0 1611.0,905.0 1639.0,964.8 1681.0,905.0 1905.0,905.0 1905.0,1005.0 1902.0,1050.6 1856.0,1075.0 1860.0,1145.0 1863.0,1250.0 1835.0,1303.0 1777.0,1360.8 1792.0,1538.0 1292.0,1538.0 1287.0,1385.0 1229.0,1312.7 1201.5,1250.0 1180.5,1180.0 1184.0,1110.0 1138.5,1047.0 1124.5,1005.0 1131.5,935.0" fill="#d85d5d"/>
<g clip-path="url(#gclip)">
 <ellipse cx="1500" cy="960" rx="120" ry="80" fill="#e07070" filter="url(#gb40)" opacity="0.6"/>
 <ellipse cx="1530" cy="1010" rx="40" ry="70" fill="#f08888" filter="url(#gb8)" opacity="0.6"/>
 <g fill="#f49a9a" opacity="0.45"><circle cx="1410" cy="1028" r="6"/><circle cx="1452" cy="1035" r="6"/><circle cx="1612" cy="1024" r="6"/><circle cx="1655" cy="1020" r="5"/></g>
 <rect x="1150" y="1160" width="240" height="90" fill="#d89a50" filter="url(#gb20)" opacity="0.75"/>
 <rect x="1190" y="1195" width="180" height="30" fill="#e0b050" filter="url(#gb8)" opacity="0.5"/>
 <ellipse cx="1640" cy="1180" rx="260" ry="115" fill="#d8d040" filter="url(#gb40)" opacity="0.95"/>
 <ellipse cx="1500" cy="1100" rx="130" ry="60" fill="#c8c040" filter="url(#gb40)" opacity="0.6"/>
 <ellipse cx="1625" cy="1196" rx="112" ry="132" fill="none" stroke="#30d840" stroke-width="22" filter="url(#gb8)"/>
 <ellipse cx="1625" cy="1196" rx="98" ry="118" fill="none" stroke="#30e0d8" stroke-width="10" filter="url(#gb3)"/>
 <ellipse cx="1625" cy="1196" rx="90" ry="110" fill="none" stroke="#a040d8" stroke-width="8" filter="url(#gb3)"/>
 <polygon points="1453.6,1076.8 1411.6,1089.0 1383.6,1110.0 1366.0,1145.0 1357.0,1250.0 1344.6,1312.7 1337.4,1408.8 1373.5,1396.8 1450.0,1399.0 1493.6,1442.5 1508.0,1408.8 1517.7,1312.7 1523.7,1250.0 1513.0,1145.0 1506.0,1117.0 1481.6,1082.0" fill="#c4b4cc" stroke="#e8c0e8" stroke-width="2"/>
 <polygon points="1566.0,1336.7 1638.0,1288.6 1695.6,1226.0 1714.8,1360.8 1724.4,1432.9 1662.0,1404.0 1613.8,1413.7 1566.0,1432.9 1561.0,1360.8" fill="#dcb0b0" stroke="#f0c8d8" stroke-width="2"/>
 <polygon points="1537.7,1127.6 1555.0,1089.0 1611.0,1080.0 1695.0,1089.0 1716.0,1180.0 1712.7,1232.6 1690.8,1226.0 1638.0,1288.6 1613.8,1298.0 1585.0,1279.0 1561.0,1245.0 1546.5,1192.5" fill="#9a98d8" stroke="#3a78e0" stroke-width="2"/>
 <polygon points="1586.7,1103.0 1640.0,1092.0 1688.0,1110.0 1700.0,1170.0 1688.0,1208.0 1640.0,1230.0 1618.6,1279.0 1594.6,1279.0 1590.0,1230.0 1575.0,1180.0 1578.0,1130.0" fill="#5a90e0" stroke="#3a88f0" stroke-width="1.5"/>
 <polygon points="1748.5,1187.7 1777.0,1163.7 1806.0,1146.8 1844.6,1154.0 1854.0,1192.5 1863.8,1240.6 1849.0,1293.5 1815.8,1336.7 1787.0,1336.7 1753.0,1308.0 1738.8,1255.0 1738.8,1216.5" fill="#68d858" stroke="#80e070" stroke-width="1.5"/>
 <ellipse cx="1800" cy="1240" rx="40" ry="50" fill="#40e040" filter="url(#gb20)" opacity="0.6"/>
 <ellipse cx="1517" cy="1006" rx="21" ry="68" fill="#e8b868" stroke="#f0e070" stroke-width="1.5"/>
 <ellipse cx="1518" cy="1015" rx="13" ry="34" fill="#d89038" stroke="#c87020" stroke-width="1"/>
 <polygon points="1537.0,1356.0 1561.0,1351.0 1566.0,1389.6 1551.0,1471.0 1527.0,1471.0 1520.0,1409.0" fill="#a8a830" stroke="#98c830" stroke-width="1.5"/>
 <circle cx="1551" cy="1298" r="27" fill="#808060" stroke="#60b040" stroke-width="1.5"/>
 <circle cx="1558" cy="1173" r="24" fill="#78b048" stroke="#60d030" stroke-width="1.5"/>
 <ellipse cx="1582" cy="1222" rx="38" ry="12" fill="#a09060" stroke="#e08040" stroke-width="1.5"/>
 <rect x="1525" y="1147" width="7" height="65" fill="#f0f0f0"/>
 <rect x="1525" y="1327" width="24" height="26" fill="#f0c8c0" stroke="#fff" stroke-width="2"/>
 <g fill="none" stroke="#f08888" stroke-width="3" opacity="0.8">
  <path d="M1270,990 C1260,960 1290,970 1330,1010 C1345,1040 1320,1075 1300,1060 C1280,1040 1280,1010 1270,990"/>
  <path d="M1800,960 C1760,980 1720,1010 1700,1040 C1690,1060 1720,1070 1740,1040 C1760,1010 1790,985 1800,960"/>
 </g>
</g>
</svg>
<div class="vtxt" style="left:4px;top:600px">F: dose (40%)
B: CTs from rtog conversion</div></div>
<div class="a" style="left:1984px;top:876px;width:894px;height:692px;background:#000;overflow:hidden" id="yelv"><svg width="894" height="692" style="left:0;top:0" viewBox="1984 876 894 692">
<defs>
 <filter id="yb3" x="-20%" y="-20%" width="140%" height="140%"><feGaussianBlur stdDeviation="3"/></filter>
 <filter id="yb10" x="-30%" y="-30%" width="160%" height="160%"><feGaussianBlur stdDeviation="10"/></filter>
 <filter id="yb25" x="-50%" y="-50%" width="200%" height="200%"><feGaussianBlur stdDeviation="25"/></filter>
 <filter id="yb50" x="-80%" y="-80%" width="260%" height="260%"><feGaussianBlur stdDeviation="50"/></filter>
 <clipPath id="yclip"><polygon points="2231.0,906.0 2229.5,921.0 2233.8,939.4 2242.0,956.0 2245.0,984.0 2256.0,998.5 2277.0,1004.0 2291.4,1016.8 2312.5,1029.4 2315.0,1040.7 2311.0,1066.0 2304.0,1080.0 2291.5,1090.0 2263.5,1122.0 2235.6,1172.5 2218.0,1249.0 2200.6,1322.0 2179.7,1444.6 2162.0,1536.0 2571.0,1536.0 2592.0,1444.6 2593.7,1340.0 2592.0,1249.0 2578.0,1155.0 2560.5,1110.0 2551.7,1080.0 2523.6,998.5 2506.7,906.0"/></clipPath>
</defs>
<rect x="1984" y="906" width="894" height="630" fill="#710000"/>
<!-- outside dose glow -->
<ellipse cx="2210" cy="1180" rx="190" ry="105" fill="#7a5a00" filter="url(#yb50)" opacity="0.9"/>
<ellipse cx="2650" cy="1165" rx="200" ry="110" fill="#5a6a00" filter="url(#yb50)"/>
<ellipse cx="2640" cy="1160" rx="110" ry="60" fill="#007000" filter="url(#yb25)"/>
<rect x="2590" y="1068" width="200" height="8" fill="#909010" filter="url(#yb10)" opacity="0.35"/>
<g stroke="#c04848" stroke-width="2.5" fill="none" opacity="0.8">
 <path d="M2526,906 C2530,960 2560,1000 2606,1012"/><line x1="2606" y1="906" x2="2606" y2="1040"/>
 <line x1="2616" y1="906" x2="2616" y2="1536"/><line x1="2653" y1="906" x2="2653" y2="1536"/><line x1="2739" y1="906" x2="2739" y2="1536"/>
</g>
<polygon points="2231.0,906.0 2229.5,921.0 2233.8,939.4 2242.0,956.0 2245.0,984.0 2256.0,998.5 2277.0,1004.0 2291.4,1016.8 2312.5,1029.4 2315.0,1040.7 2311.0,1066.0 2304.0,1080.0 2291.5,1090.0 2263.5,1122.0 2235.6,1172.5 2218.0,1249.0 2200.6,1322.0 2179.7,1444.6 2162.0,1536.0 2571.0,1536.0 2592.0,1444.6 2593.7,1340.0 2592.0,1249.0 2578.0,1155.0 2560.5,1110.0 2551.7,1080.0 2523.6,998.5 2506.7,906.0" fill="#d85d5d"/>
<polygon points="2356,906 2368,906 2374,956 2376,998 2372,1036 2352,1036 2355,998 2362,956" fill="#7a0808" filter="url(#yb3)"/>
<polygon points="2268,906 2324,906 2318,913 2272,914" fill="#8a1a1a"/>
<g clip-path="url(#yclip)">
 <rect x="2100" y="1055" width="600" height="270" fill="#d8d030" filter="url(#yb10)"/>
 <rect x="2100" y="1085" width="600" height="200" fill="#30d040" filter="url(#yb25)"/>
 <ellipse cx="2400" cy="1160" rx="150" ry="80" fill="#20c8c8" filter="url(#yb25)" opacity="0.9"/>
 <ellipse cx="2390" cy="1180" rx="60" ry="40" fill="#3050d0" filter="url(#yb25)" opacity="0.7"/>
 <ellipse cx="2540" cy="1150" rx="60" ry="60" fill="#10a850" filter="url(#yb25)" opacity="0.7"/>
 <path d="M2235,1150 C2260,1100 2300,1075 2320,1070" stroke="#60e8a0" stroke-width="5" fill="none" opacity="0.7"/>
 <polygon points="2290.0,1180.0 2350.0,1150.0 2400.0,1150.0 2432.0,1200.0 2440.0,1260.0 2432.0,1383.0 2360.0,1385.0 2280.0,1386.0 2256.0,1375.0 2260.0,1300.0 2275.0,1240.0" fill="#60d040" stroke="#78e040" stroke-width="1.5"/>
 <polygon points="2256,1254 2430,1254 2442,1280 2436,1320 2410,1350 2380,1370 2345,1384 2265,1386 2256,1330" fill="#989850" opacity="0.9"/>
 <circle cx="2400" cy="1312" r="42" fill="#888070"/>
 <circle cx="2345" cy="1345" r="28" fill="#888878"/>
 <polygon points="2290,1336 2312,1336 2312,1360 2330,1374 2340,1384 2265,1384 2280,1370" fill="#5a4ab8" stroke="#4030e0" stroke-width="1.5"/>
 <polygon points="2380,1185 2430,1185 2432,1240 2405,1250 2380,1230" fill="#8a48c8" opacity="0.9"/>
 <polygon points="2405,1175 2420,1175 2432,1230 2420,1240 2410,1220" fill="#c01870" opacity="0.9"/>
 <polygon points="2313.0,1154.0 2318.0,1162.0 2305.0,1200.0 2290.0,1250.0 2268.0,1290.0 2258.0,1285.0 2262.0,1240.0 2280.0,1200.0" fill="#a8c0d0" stroke="#f0d0f0" stroke-width="2"/>
 <polygon points="2352.0,1036.0 2366.0,1036.0 2398.0,1100.0 2400.0,1137.0 2390.0,1137.0 2370.0,1100.0 2356.0,1070.0" fill="#a03050" stroke="#e02080" stroke-width="2"/>
 <polygon points="2380.0,1036.0 2392.0,1036.0 2418.0,1100.0 2438.0,1160.0 2446.0,1240.0 2432.0,1240.0 2426.0,1160.0 2406.0,1100.0" fill="#f0e0e0" stroke="#fff" stroke-width="2"/>
 <polygon points="2444.0,1262.0 2450.0,1270.0 2448.0,1320.0 2430.0,1350.0 2400.0,1396.0 2390.0,1394.0 2395.0,1375.0 2425.0,1335.0 2438.0,1310.0 2440.0,1280.0" fill="#f0e0e0" stroke="#fff" stroke-width="2"/>
 <polygon points="2446,1320 2500,1320 2498,1536 2430,1536" fill="#f08080" opacity="0.35" filter="url(#yb3)"/>
 <g fill="#f49090" opacity="0.22"><rect x="2450" y="1345" width="44" height="26" rx="5"/><rect x="2448" y="1385" width="44" height="26" rx="5"/><rect x="2444" y="1425" width="44" height="26" rx="5"/><rect x="2440" y="1465" width="44" height="26" rx="5"/><rect x="2436" y="1505" width="44" height="26" rx="5"/></g>
 <polygon points="2411.0,942.0 2428.0,942.0 2438.0,1000.0 2452.0,1060.0 2466.0,1080.0 2494.0,1160.0 2512.0,1240.0 2521.0,1300.0 2519.0,1400.0 2512.0,1480.0 2502.0,1505.0 2490.0,1505.0 2478.0,1480.0 2494.0,1400.0 2501.0,1300.0 2490.0,1240.0 2472.0,1160.0 2444.0,1080.0 2428.0,1060.0 2415.0,1000.0" fill="#e8c070" fill-opacity="0.85" stroke="#f0e080" stroke-width="1.5"/>
 <polygon points="2396.0,1376.0 2441.0,1376.0 2440.0,1440.0 2430.0,1472.0 2398.0,1472.0 2396.0,1420.0" fill="#a8a038" stroke="#98c030" stroke-width="1.5"/>
 <polygon points="2492.0,1458.0 2498.0,1458.0 2498.0,1492.0 2486.0,1492.0 2486.0,1476.0 2490.0,1476.0" fill="#e0a050" stroke="#d07020" stroke-width="1.5"/>
 <path d="M2254,929 C2262,940 2284,965 2284,980 C2284,990 2270,993 2267,985 C2263,975 2268,960 2252,934 Z" fill="none" stroke="#f89090" stroke-width="6" stroke-linejoin="round"/>
</g>
</svg>
<div class="vtxt" style="left:4px;top:600px">F: dose (40%)
B: CTs from rtog conversion</div></div>
<div class="hdr" style="left:1086px;top:116px;width:896px;background:linear-gradient(#ff2a16 0%,#e6301f 30%,#ff3422 55%,#ff3422 88%,#c02818 100%)"></div>
<div class="hdr" style="left:1120px;top:116px;width:34px;background:#ff7a6a"></div>
<div class="t" style="left:1130px;top:120px;font-size:25px">R</div>
<svg width="24" height="14" style="left:1091px;top:125px" viewBox="0 0 24 14"><line x1="1" y1="7" x2="9" y2="7" stroke="#555" stroke-width="1.5" opacity="0.7"/><rect x="8" y="2" width="5" height="10" fill="#3c3c3c"/><rect x="12" y="5" width="8" height="4" fill="#2a2a2a"/><rect x="19" y="3" width="4" height="8" fill="#4a4a4a"/></svg>
<svg width="30" height="30" style="left:1159px;top:117px" viewBox="0 0 30 30"><rect x="4" y="4" width="18" height="18" fill="#9a1a10" opacity="0.9"/><rect x="4" y="4" width="9" height="9" fill="#ff9a90"/><rect x="13" y="13" width="9" height="9" fill="#000" opacity="0.35"/><g fill="#111"><rect x="12" y="0" width="2.5" height="2.5"/><rect x="12" y="24" width="2.5" height="2.5"/><rect x="0" y="12" width="2.5" height="2.5"/><rect x="24" y="12" width="2.5" height="2.5"/></g></svg>
<div class="a" style="left:1204px;top:126px;width:582px;height:10px;border:2px solid #000;border-radius:5px;background:linear-gradient(90deg,#3c9cf6 0,#3c9cf6 292px,#d6d6d6 292px)"></div>
<div class="a" style="left:1486px;top:118px;width:21px;height:26px;border:2.5px solid #000;border-radius:6px;background:linear-gradient(#fff,#f0f0f0)"></div>
<div class="hdr" style="left:1794px;top:116px;width:188px;height:30px;background:#ff7a6a"></div>
<div class="t" style="left:1797px;top:120px;font-size:24px">S: -542.5000mm</div>
<div class="hdr" style="left:1984px;top:116px;width:894px;background:linear-gradient(#7686fa 0%,#6a7ae2 30%,#7888fa 60%,#7484f4 85%,#5e6ed0 100%)"></div>
<div class="hdr" style="left:2018px;top:116px;width:34px;background:#b0b8fc"></div>
<div class="t" style="left:2028px;top:120px;font-size:25px">1</div>
<svg width="24" height="14" style="left:1989px;top:125px" viewBox="0 0 24 14"><line x1="1" y1="7" x2="9" y2="7" stroke="#555" stroke-width="1.5" opacity="0.7"/><rect x="8" y="2" width="5" height="10" fill="#3c3c3c"/><rect x="12" y="5" width="8" height="4" fill="#2a2a2a"/><rect x="19" y="3" width="4" height="8" fill="#4a4a4a"/></svg>
<svg width="30" height="30" style="left:2057px;top:118px" viewBox="0 0 30 30"><rect x="2" y="2" width="24" height="24" fill="#8a96e8" opacity="0.6"/><rect x="6" y="6" width="16" height="16" fill="#6670c0" opacity="0.7"/><rect x="10" y="10" width="8" height="8" fill="#9aa4f0"/><g fill="#1a1a2a"><rect x="13" y="0" width="2.5" height="6"/><rect x="13" y="22" width="2.5" height="6"/><rect x="0" y="13" width="6" height="2.5"/><rect x="22" y="13" width="6" height="2.5"/><rect x="7" y="7" width="2.5" height="2.5"/><rect x="19" y="7" width="2.5" height="2.5"/><rect x="7" y="19" width="2.5" height="2.5"/><rect x="19" y="19" width="2.5" height="2.5"/></g></svg>
<div class="hdr" style="left:1086px;top:844px;width:896px;background:linear-gradient(#74f04c 0%,#50a234 32%,#5cb83c 55%,#5cb83c 88%,#4a9a30 100%)"></div>
<div class="hdr" style="left:1120px;top:844px;width:34px;background:#6ee84a"></div>
<div class="t" style="left:1130px;top:848px;font-size:25px">G</div>
<svg width="24" height="14" style="left:1091px;top:853px" viewBox="0 0 24 14"><line x1="1" y1="7" x2="9" y2="7" stroke="#555" stroke-width="1.5" opacity="0.7"/><rect x="8" y="2" width="5" height="10" fill="#3c3c3c"/><rect x="12" y="5" width="8" height="4" fill="#2a2a2a"/><rect x="19" y="3" width="4" height="8" fill="#4a4a4a"/></svg>
<svg width="30" height="30" style="left:1159px;top:845px" viewBox="0 0 30 30"><rect x="4" y="4" width="18" height="18" fill="#2a6a1a" opacity="0.9"/><rect x="4" y="4" width="9" height="9" fill="#9ae080"/><rect x="13" y="13" width="9" height="9" fill="#000" opacity="0.35"/><g fill="#111"><rect x="12" y="0" width="2.5" height="2.5"/><rect x="12" y="24" width="2.5" height="2.5"/><rect x="0" y="12" width="2.5" height="2.5"/><rect x="24" y="12" width="2.5" height="2.5"/></g></svg>
<div class="a" style="left:1204px;top:854px;width:589px;height:10px;border:2px solid #000;border-radius:5px;background:linear-gradient(90deg,#3c9cf6 0,#3c9cf6 296px,#d6d6d6 296px)"></div>
<div class="a" style="left:1490px;top:846px;width:21px;height:26px;border:2.5px solid #000;border-radius:6px;background:linear-gradient(#fff,#f0f0f0)"></div>
<div class="hdr" style="left:1802px;top:844px;width:180px;height:30px;background:#6ee84a"></div>
<div class="t" style="left:1806px;top:848.5px;font-size:22.6px">A: 107.5500mm</div>
<div class="hdr" style="left:1984px;top:844px;width:894px;background:linear-gradient(#ffe014 0%,#d6bc1c 30%,#f8dc18 60%,#f8dc18 88%,#c8b010 100%)"></div>
<div class="hdr" style="left:2018px;top:844px;width:34px;background:#ffe878"></div>
<div class="t" style="left:2028px;top:848px;font-size:25px">Y</div>
<svg width="24" height="14" style="left:1989px;top:853px" viewBox="0 0 24 14"><line x1="1" y1="7" x2="9" y2="7" stroke="#555" stroke-width="1.5" opacity="0.7"/><rect x="8" y="2" width="5" height="10" fill="#3c3c3c"/><rect x="12" y="5" width="8" height="4" fill="#2a2a2a"/><rect x="19" y="3" width="4" height="8" fill="#4a4a4a"/></svg>
<svg width="30" height="30" style="left:2057px;top:845px" viewBox="0 0 30 30"><rect x="4" y="4" width="18" height="18" fill="#6a5a08" opacity="0.9"/><rect x="4" y="4" width="9" height="9" fill="#e8e0a0"/><rect x="13" y="13" width="9" height="9" fill="#000" opacity="0.35"/><g fill="#111"><rect x="12" y="0" width="2.5" height="2.5"/><rect x="12" y="24" width="2.5" height="2.5"/><rect x="0" y="12" width="2.5" height="2.5"/><rect x="24" y="12" width="2.5" height="2.5"/></g></svg>
<div class="a" style="left:2102px;top:854px;width:579px;height:10px;border:2px solid #000;border-radius:5px;background:linear-gradient(90deg,#3c9cf6 0,#3c9cf6 292px,#d6d6d6 292px)"></div>
<div class="a" style="left:2384px;top:846px;width:21px;height:26px;border:2.5px solid #000;border-radius:6px;background:linear-gradient(#fff,#f0f0f0)"></div>
<div class="hdr" style="left:2690px;top:844px;width:188px;height:30px;background:#ffe878"></div>
<div class="t" style="left:2693px;top:848px;font-size:23.4px">R: 0.6200mm</div>



<!-- STATUS -->

<div class="a" style="left:300px;top:1568px;width:2578px;height:70px;background:linear-gradient(#ececec,#d9d9d9);-webkit-mask-image:linear-gradient(90deg,transparent 0,#000 500px)"></div>
<div class="t" style="left:2357px;top:1590px;font-size:26.6px;font-weight:700;color:#f00000">Application is managed by Jupyter</div>
<div class="a" style="left:2813px;top:1575px;width:63px;height:60px;border:2px solid #9a9a9a;border-radius:5px;background:linear-gradient(#fbfbfb,#ececec)"></div>
<svg width="50" height="50" style="left:2818px;top:1579px" viewBox="0 0 50 50"><circle cx="25" cy="24" r="22" fill="#ee0000"/><path d="M15,14 L35,34 M35,14 L15,34" stroke="#fff" stroke-width="5"/></svg>

</body></html>
